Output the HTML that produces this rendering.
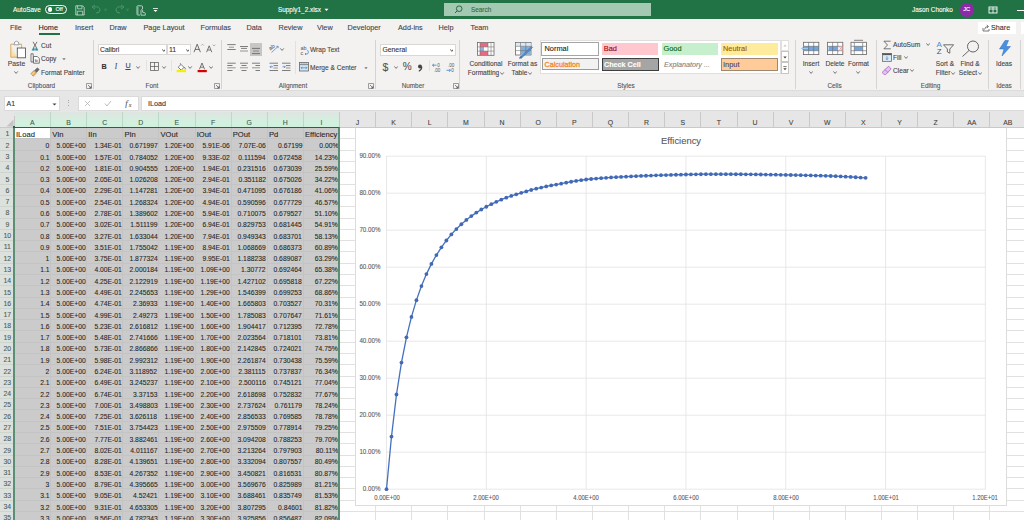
<!DOCTYPE html><html><head><meta charset="utf-8"><style>
html,body{margin:0;padding:0}
body{width:1024px;height:520px;overflow:hidden;position:relative;font-family:'Liberation Sans', sans-serif;background:#fff}
.t{position:absolute;white-space:pre;-webkit-text-stroke:0.1px currentColor}
.b{position:absolute;box-sizing:border-box}
</style></head><body>
<div class="b" style="left:0px;top:0px;width:1024px;height:18.7px;background:#217346"></div>
<div class="t" style="left:13px;top:3.749999999999999px;line-height:12.9px;font-size:6.45px;color:#fff;">AutoSave</div>
<div class="b" style="left:45px;top:5px;width:21.5px;height:8.6px;border:1px solid #fff;border-radius:5px"></div>
<div class="b" style="left:47.6px;top:7.2px;width:4.4px;height:4.4px;background:#fff;border-radius:50%"></div>
<div class="t" style="left:55.5px;top:4.300000000000001px;line-height:11.2px;font-size:5.6px;color:#fff;">Off</div>
<svg class="b" style="left:74.5px;top:4.5px" width="10" height="11" viewBox="0 0 10 11"><path d="M0.8 0.8H7.6L9.2 2.4V10H0.8Z" fill="none" stroke="#d5e8dc" stroke-width="0.75"/><path d="M2.6 0.8V3.8H7V0.8" fill="none" stroke="#d5e8dc" stroke-width="0.7"/><path d="M2.3 10V6.2H7.7V10" fill="none" stroke="#d5e8dc" stroke-width="0.7"/></svg>
<svg class="b" style="left:91px;top:4px" width="12" height="11" viewBox="0 0 12 11"><path d="M3 3 Q9 2 9 6 Q9 9 5 9" fill="none" stroke="#4f9470" stroke-width="1"/><path d="M1 3 L4 1 M1 3 L4 5" stroke="#4f9470" stroke-width="1"/></svg>
<div class="t" style="left:104px;top:4.5px;line-height:10px;font-size:5px;color:#4f9470;">˅</div>
<svg class="b" style="left:113px;top:4px" width="12" height="11" viewBox="0 0 12 11"><path d="M9 3 Q3 2 3 6 Q3 9 7 9" fill="none" stroke="#4f9470" stroke-width="1"/><path d="M11 3 L8 1 M11 3 L8 5" stroke="#4f9470" stroke-width="1"/></svg>
<div class="t" style="left:126px;top:4.5px;line-height:10px;font-size:5px;color:#4f9470;">˅</div>
<svg class="b" style="left:135.5px;top:4.5px" width="10" height="11" viewBox="0 0 10 11"><path d="M1 1.5Q1 0.8 1.7 0.8H5.5Q6.5 0.8 6.5 1.8V4" fill="none" stroke="#d5e8dc" stroke-width="0.8"/><path d="M1 1.5V9.3Q1 10 1.7 10H4" fill="none" stroke="#d5e8dc" stroke-width="0.8"/><path d="M2 2V9" stroke="#d5e8dc" stroke-width="0.6"/><path d="M5 10.2V5.5Q5 4.6 5.8 4.6Q6.6 4.6 6.6 5.5V7.2L8.5 7.6Q9.3 7.8 9.3 8.6V10.2Z" fill="#217346" stroke="#d5e8dc" stroke-width="0.75"/></svg>
<svg class="b" style="left:152px;top:6px" width="7" height="7" viewBox="0 0 7 7"><path d="M1 2.5H6" stroke="#fff" stroke-width="0.8"/><path d="M1.5 4L3.5 6L5.5 4Z" fill="#fff"/></svg>
<div class="t" style="left:278px;top:3.5999999999999996px;line-height:12.8px;font-size:6.4px;color:#fff;">Supply1_2.xlsx</div>
<svg class="b" style="left:324px;top:7.5px" width="5" height="4" viewBox="0 0 5 4"><path d="M0.5 0.8L2.5 3L4.5 0.8Z" fill="#fff"/></svg>
<div class="b" style="left:443.6px;top:3.3px;width:207px;height:12.3px;background:#a3c9b2"></div>
<svg class="b" style="left:454px;top:5px" width="9" height="9" viewBox="0 0 9 9"><circle cx="5.2" cy="3.7" r="2.8" fill="none" stroke="#1e5f3a" stroke-width="0.9"/><path d="M3.2 5.8L1 8" stroke="#1e5f3a" stroke-width="0.9"/></svg>
<div class="t" style="left:471px;top:3.6999999999999993px;line-height:12.8px;font-size:6.4px;color:#2e6b49;">Search</div>
<div class="t" style="left:912px;top:3.9000000000000004px;line-height:12.8px;font-size:6.4px;color:#fff;">Jason Chonko</div>
<div class="b" style="left:960px;top:3px;width:13.5px;height:13.5px;background:#8e2aa7;border-radius:50%"></div>
<div class="t" style="left:766.7px;width:400px;text-align:center;top:4.000000000000001px;line-height:11.6px;font-size:5.8px;color:#fff;">JC</div>
<svg class="b" style="left:988px;top:5.5px" width="10" height="8" viewBox="0 0 10 8"><rect x="1" y="1" width="8" height="6" fill="none" stroke="#fff" stroke-width="0.9"/><path d="M1 3H9M5 1V7" stroke="#fff" stroke-width="0.8"/></svg>
<div class="b" style="left:1017px;top:9.5px;width:7px;height:0.9px;background:#fff"></div>
<div class="b" style="left:0px;top:18.7px;width:1024px;height:71.7px;background:#f3f2f1"></div>
<div class="t" style="left:10px;top:21.0px;line-height:14.6px;font-size:7.3px;color:#444;">File</div>
<div class="t" style="left:38.5px;top:21.0px;line-height:14.6px;font-size:7.3px;color:#1f1f1f;">Home</div>
<div class="t" style="left:75px;top:21.0px;line-height:14.6px;font-size:7.3px;color:#444;">Insert</div>
<div class="t" style="left:109.5px;top:21.0px;line-height:14.6px;font-size:7.3px;color:#444;">Draw</div>
<div class="t" style="left:143.5px;top:21.0px;line-height:14.6px;font-size:7.3px;color:#444;">Page Layout</div>
<div class="t" style="left:200.5px;top:21.0px;line-height:14.6px;font-size:7.3px;color:#444;">Formulas</div>
<div class="t" style="left:246.5px;top:21.0px;line-height:14.6px;font-size:7.3px;color:#444;">Data</div>
<div class="t" style="left:278.5px;top:21.0px;line-height:14.6px;font-size:7.3px;color:#444;">Review</div>
<div class="t" style="left:317px;top:21.0px;line-height:14.6px;font-size:7.3px;color:#444;">View</div>
<div class="t" style="left:347.5px;top:21.0px;line-height:14.6px;font-size:7.3px;color:#444;">Developer</div>
<div class="t" style="left:398px;top:21.0px;line-height:14.6px;font-size:7.3px;color:#444;">Add-ins</div>
<div class="t" style="left:438.5px;top:21.0px;line-height:14.6px;font-size:7.3px;color:#444;">Help</div>
<div class="t" style="left:470.5px;top:21.0px;line-height:14.6px;font-size:7.3px;color:#444;">Team</div>
<div class="b" style="left:38.5px;top:33.3px;width:21px;height:1.4px;background:#217346"></div>
<div class="b" style="left:978px;top:21.5px;width:37.5px;height:12.5px;background:#fff"></div>
<svg class="b" style="left:981.5px;top:23.5px" width="8" height="8" viewBox="0 0 8 8"><path d="M1 4V7H7V5" fill="none" stroke="#555" stroke-width="0.8"/><path d="M2.5 5.5Q3 2.5 6 2.5M4.8 1L6.5 2.5L4.8 4" fill="none" stroke="#555" stroke-width="0.8"/></svg>
<div class="t" style="left:991px;top:20.6px;line-height:14.4px;font-size:7.2px;color:#333;">Share</div>
<div class="b" style="left:1021px;top:21.5px;width:3px;height:12.5px;background:#fff"></div>
<svg class="b" style="left:9px;top:39.5px" width="18" height="19" viewBox="0 0 18 19"><defs><linearGradient id="pg" x1="0" y1="0" x2="0" y2="1"><stop offset="0" stop-color="#fdf3dc"/><stop offset="1" stop-color="#f3dba6"/></linearGradient></defs><path d="M1.8 4.2H5.2M9.8 4.2H12.6V8" fill="none" stroke="#d2a556" stroke-width="0.9"/><path d="M1.8 4.2V17.2H8" fill="url(#pg)" stroke="#d2a556" stroke-width="0.9"/><path d="M5 4.8Q5 1.2 7.5 1.2Q10 1.2 10 4.8Z" fill="#fff" stroke="#8a8a8a" stroke-width="0.8"/><rect x="8.3" y="8" width="8.2" height="9.8" fill="#fff" stroke="#5a5a5a" stroke-width="0.9"/></svg>
<div class="t" style="left:-183.5px;width:400px;text-align:center;top:56.5px;line-height:13.6px;font-size:6.8px;color:#444;">Paste</div>
<svg class="b" style="left:14.4px;top:70.5px" width="4.2" height="3" viewBox="0 0 4.2 3"><path d="M0.4 0.4L2.1 2.4L3.8000000000000003 0.4" fill="none" stroke="#555" stroke-width="0.8"/></svg>
<svg class="b" style="left:30.5px;top:40.5px" width="8" height="10" viewBox="0 0 8 10"><path d="M2 0.8L5.2 6.2M6 0.8L2.8 6.2" stroke="#555" stroke-width="0.8"/><path d="M2.8 6L1 9.2H3.6Z M5.2 6L7 9.2H4.4Z" fill="#3b8fa3" stroke="#3b8fa3" stroke-width="0.6"/></svg>
<div class="t" style="left:41px;top:38.6px;line-height:13.2px;font-size:6.6px;color:#444;">Cut</div>
<svg class="b" style="left:29.5px;top:53px" width="11" height="11" viewBox="0 0 11 11"><path d="M1 0.8H3.2V9H1Z" fill="#fff" stroke="#555" stroke-width="0.8"/><path d="M3.5 3.5H7.3L9.3 5.5V10.2H3.5Z" fill="#fff" stroke="#555" stroke-width="0.8"/><path d="M5.3 6.2V8.6H7.3V7.2H5.3" fill="none" stroke="#555" stroke-width="0.6"/></svg>
<div class="t" style="left:41px;top:52.4px;line-height:13.2px;font-size:6.6px;color:#444;">Copy</div>
<svg class="b" style="left:62px;top:58.2px" width="4" height="2.5" viewBox="0 0 4 2.5"><path d="M0.3 0.3L2 2.2L3.7 0.3Z" fill="#777"/></svg>
<svg class="b" style="left:29.5px;top:66.5px" width="10" height="10" viewBox="0 0 10 10"><path d="M0.8 6.8L3.8 3.6L6.4 6.2L3.2 9.2Z" fill="#eab86a" stroke="#b37a2c" stroke-width="0.6"/><path d="M1.6 7.8L4.6 4.8" stroke="#fff3d8" stroke-width="0.6"/><path d="M4.6 3.4L7.4 0.8L9.2 2.6L6.6 5.4Z" fill="#6a6a6a" stroke="#555" stroke-width="0.5"/></svg>
<div class="t" style="left:41px;top:65.7px;line-height:13.2px;font-size:6.6px;color:#444;">Format Painter</div>
<div class="t" style="left:-158.5px;width:400px;text-align:center;top:80.0px;line-height:12.8px;font-size:6.4px;color:#555;">Clipboard</div>
<svg class="b" style="left:85.5px;top:83px" width="6" height="6" viewBox="0 0 6 6"><path d="M0.5 0.5H5.5V5.5H0.5Z" fill="none" stroke="#777" stroke-width="0.7" stroke-dasharray="0"/><path d="M2 2L5 5M5 3V5H3" fill="none" stroke="#555" stroke-width="0.7"/></svg>
<div class="b" style="left:92.5px;top:40px;width:0.9px;height:49px;background:#d6d4d2"></div>
<div class="b" style="left:97.8px;top:43.5px;width:69.4px;height:11.6px;background:#fff;border:0.8px solid #dad8d6"></div>
<div class="t" style="left:100px;top:42.6px;line-height:13.6px;font-size:6.8px;color:#333;">Calibri</div>
<svg class="b" style="left:161.7px;top:48.5px" width="3.6" height="3" viewBox="0 0 3.6 3"><path d="M0.4 0.4L1.8 2.4L3.2 0.4" fill="none" stroke="#333" stroke-width="0.8"/></svg>
<div class="b" style="left:167px;top:43.5px;width:24.2px;height:11.6px;background:#fff;border:0.8px solid #dad8d6"></div>
<div class="t" style="left:169px;top:42.6px;line-height:14.0px;font-size:7.0px;color:#333;">11</div>
<svg class="b" style="left:185.7px;top:48.5px" width="3.6" height="3" viewBox="0 0 3.6 3"><path d="M0.4 0.4L1.8 2.4L3.2 0.4" fill="none" stroke="#333" stroke-width="0.8"/></svg>
<svg class="b" style="left:193px;top:43px" width="24" height="11" viewBox="0 0 24 11"><path d="M1 9.2L4.2 1.2L7.4 9.2M2.2 6.4H6.2" fill="none" stroke="#555" stroke-width="0.85"/><path d="M8.2 2.6L9.6 1.2L11 2.6" fill="none" stroke="#888" stroke-width="0.6"/><path d="M13.6 9.2L16.2 2.8L18.8 9.2M14.6 7H17.8" fill="none" stroke="#555" stroke-width="0.8"/><path d="M19.6 1.6L21 3L22.4 1.6" fill="none" stroke="#888" stroke-width="0.6"/></svg>
<div class="t" style="left:-96px;width:400px;text-align:center;top:59.599999999999994px;line-height:14.4px;font-size:7.2px;color:#333;font-weight:bold">B</div>
<div class="t" style="left:-84px;width:400px;text-align:center;top:59.599999999999994px;line-height:14.4px;font-size:7.2px;color:#444;font-style:italic;font-family:Liberation Serif">I</div>
<div class="t" style="left:-72px;width:400px;text-align:center;top:59.3px;line-height:14.4px;font-size:7.2px;color:#444;text-decoration:underline">U</div>
<svg class="b" style="left:136.4px;top:65.5px" width="4.2" height="3" viewBox="0 0 4.2 3"><path d="M0.4 0.4L2.1 2.4L3.8000000000000003 0.4" fill="none" stroke="#555" stroke-width="0.8"/></svg>
<div class="b" style="left:145.5px;top:60px;width:0.7px;height:11px;background:#e4e2e0"></div>
<svg class="b" style="left:150px;top:61.8px" width="9" height="9" viewBox="0 0 9 9"><rect x="0.4" y="0.4" width="8.2" height="8.2" fill="none" stroke="#555" stroke-width="0.7"/><path d="M4.5 0.4V8.6M0.4 4.5H8.6" stroke="#555" stroke-width="0.7"/></svg>
<svg class="b" style="left:162.4px;top:65.5px" width="4.2" height="3" viewBox="0 0 4.2 3"><path d="M0.4 0.4L2.1 2.4L3.8000000000000003 0.4" fill="none" stroke="#555" stroke-width="0.8"/></svg>
<div class="b" style="left:171px;top:60px;width:0.7px;height:11px;background:#e4e2e0"></div>
<svg class="b" style="left:175.5px;top:61.5px" width="11" height="11" viewBox="0 0 11 11"><path d="M2.2 5.2L5 2.4L8 5.4L5.2 8.2Z" fill="#fff" stroke="#555" stroke-width="0.75"/><path d="M4.2 1.2L5 2.4" stroke="#555" stroke-width="0.7"/><path d="M8.4 5.2Q9.6 6.4 9.2 7.4" fill="none" stroke="#555" stroke-width="0.8"/><rect x="0.6" y="8" width="9.4" height="2.2" fill="#f2f200"/></svg>
<svg class="b" style="left:188.4px;top:65.5px" width="4.2" height="3" viewBox="0 0 4.2 3"><path d="M0.4 0.4L2.1 2.4L3.8000000000000003 0.4" fill="none" stroke="#555" stroke-width="0.8"/></svg>
<svg class="b" style="left:196.5px;top:61.5px" width="10" height="11" viewBox="0 0 10 11"><path d="M2.4 7.4L5 1L7.6 7.4M3.4 5.2H6.6" fill="none" stroke="#555" stroke-width="0.8"/><rect x="0.6" y="8" width="9.2" height="2.2" fill="#d90000"/></svg>
<svg class="b" style="left:208.9px;top:65.5px" width="4.2" height="3" viewBox="0 0 4.2 3"><path d="M0.4 0.4L2.1 2.4L3.8000000000000003 0.4" fill="none" stroke="#555" stroke-width="0.8"/></svg>
<div class="t" style="left:-48px;width:400px;text-align:center;top:80.0px;line-height:12.8px;font-size:6.4px;color:#555;">Font</div>
<svg class="b" style="left:214px;top:83px" width="6" height="6" viewBox="0 0 6 6"><path d="M0.5 0.5H5.5V5.5H0.5Z" fill="none" stroke="#777" stroke-width="0.7" stroke-dasharray="0"/><path d="M2 2L5 5M5 3V5H3" fill="none" stroke="#555" stroke-width="0.7"/></svg>
<div class="b" style="left:220.6px;top:40px;width:0.9px;height:49px;background:#d6d4d2"></div>
<div class="b" style="left:250.2px;top:43px;width:11.8px;height:12.6px;background:#c8c6c4"></div>
<svg class="b" style="left:0;top:0" width="1024" height="100" viewBox="0 0 1024 100"><path d="M227.3 44.6H235.7" stroke="#555" stroke-width="0.75"/><path d="M229 47.2H234" stroke="#777" stroke-width="0.75"/><path d="M227.3 49.5H235.7" stroke="#555" stroke-width="0.75"/><path d="M240 46.5H248" stroke="#555" stroke-width="0.75"/><path d="M241 48.4H247" stroke="#555" stroke-width="0.75"/><path d="M240 51H248" stroke="#777" stroke-width="0.75"/><path d="M252 48.4H260" stroke="#555" stroke-width="0.75"/><path d="M253 51H259" stroke="#777" stroke-width="0.75"/><path d="M252 53.6H260" stroke="#555" stroke-width="0.75"/><path d="M227.3 63.2H235.7" stroke="#555" stroke-width="0.75"/><path d="M240 63.2H248" stroke="#555" stroke-width="0.75"/><path d="M252 63.2H260" stroke="#555" stroke-width="0.75"/><path d="M227.3 65.5H232.5" stroke="#555" stroke-width="0.75"/><path d="M241.5 65.5H246.5" stroke="#555" stroke-width="0.75"/><path d="M255.5 65.5H260" stroke="#555" stroke-width="0.75"/><path d="M227.3 67.8H235.7" stroke="#777" stroke-width="0.75"/><path d="M240 67.8H248" stroke="#777" stroke-width="0.75"/><path d="M252 67.8H260" stroke="#777" stroke-width="0.75"/><path d="M227.3 70.5H232.5" stroke="#555" stroke-width="0.75"/><path d="M241.5 70.5H246.5" stroke="#555" stroke-width="0.75"/><path d="M255.5 70.5H260" stroke="#555" stroke-width="0.75"/><path d="M269.5 63.2H278.0" stroke="#555" stroke-width="0.75"/><path d="M273.5 65.6H278.0" stroke="#555" stroke-width="0.75"/><path d="M273.5 68H278.0" stroke="#777" stroke-width="0.75"/><path d="M269.5 70.5H278.0" stroke="#555" stroke-width="0.75"/><path d="M282 63.2H290.5" stroke="#555" stroke-width="0.75"/><path d="M286 65.6H290.5" stroke="#555" stroke-width="0.75"/><path d="M286 68H290.5" stroke="#777" stroke-width="0.75"/><path d="M282 70.5H290.5" stroke="#555" stroke-width="0.75"/><path d="M273 66.8H270M271.2 65.6L270 66.8L271.2 68" fill="none" stroke="#3a7dc9" stroke-width="0.7"/><path d="M282.5 66.8H285.3M284.1 65.6L285.3 66.8L284.1 68" fill="none" stroke="#3a7dc9" stroke-width="0.7"/><text x="268.5" y="49" font-size="5.8" fill="#555" font-family="Liberation Sans" transform="rotate(-40 272 47)">ab</text><path d="M271.5 52.5L278 46.5M276.3 46.3H278.2V48.2" fill="none" stroke="#3a7dc9" stroke-width="0.7"/></svg>
<svg class="b" style="left:280.4px;top:47.5px" width="4.2" height="3" viewBox="0 0 4.2 3"><path d="M0.4 0.4L2.1 2.4L3.8000000000000003 0.4" fill="none" stroke="#555" stroke-width="0.8"/></svg>
<div class="b" style="left:294.6px;top:41px;width:0.7px;height:33px;background:#e3e1df"></div>
<svg class="b" style="left:299.5px;top:43.5px" width="10" height="12" viewBox="0 0 10 12"><text x="0.5" y="5.5" font-size="5.5" fill="#555" font-family="Liberation Sans">ab</text><text x="0.5" y="11" font-size="5.5" fill="#555" font-family="Liberation Sans">c</text><path d="M7.5 6Q9.5 8 7.5 10H5M6 9L5 10L6 11" fill="none" stroke="#3a7dc9" stroke-width="0.7"/></svg>
<div class="t" style="left:310px;top:42.9px;line-height:13.2px;font-size:6.6px;color:#444;">Wrap Text</div>
<svg class="b" style="left:298.5px;top:62px" width="10" height="9.5" viewBox="0 0 10 9.5"><rect x="0.5" y="0.5" width="9" height="8.5" fill="#cfe3f5" stroke="#666" stroke-width="0.8"/><path d="M0.5 2.6H9.5" stroke="#666" stroke-width="0.7"/><path d="M2.8 1.2V2.2M5 1.2V2.2M7.2 1.2V2.2" stroke="#666" stroke-width="0.5"/><path d="M2 5.8H8M3 4.8L2 5.8L3 6.8M7 4.8L8 5.8L7 6.8" fill="none" stroke="#3a6fa8" stroke-width="0.6"/></svg>
<div class="t" style="left:310px;top:60.9px;line-height:13.2px;font-size:6.6px;color:#444;">Merge &amp; Center</div>
<svg class="b" style="left:363.5px;top:66.6px" width="4" height="2.5" viewBox="0 0 4 2.5"><path d="M0.3 0.3L2 2.2L3.7 0.3Z" fill="#777"/></svg>
<div class="t" style="left:93px;width:400px;text-align:center;top:80.0px;line-height:12.8px;font-size:6.4px;color:#555;">Alignment</div>
<svg class="b" style="left:368px;top:83px" width="6" height="6" viewBox="0 0 6 6"><path d="M0.5 0.5H5.5V5.5H0.5Z" fill="none" stroke="#777" stroke-width="0.7" stroke-dasharray="0"/><path d="M2 2L5 5M5 3V5H3" fill="none" stroke="#555" stroke-width="0.7"/></svg>
<div class="b" style="left:374.5px;top:40px;width:0.9px;height:49px;background:#d6d4d2"></div>
<div class="b" style="left:380px;top:43.5px;width:75.6px;height:12px;background:#fff;border:0.8px solid #dad8d6"></div>
<div class="t" style="left:382.5px;top:42.900000000000006px;line-height:13.6px;font-size:6.8px;color:#333;">General</div>
<svg class="b" style="left:449.7px;top:48.5px" width="3.6" height="3" viewBox="0 0 3.6 3"><path d="M0.4 0.4L1.8 2.4L3.2 0.4" fill="none" stroke="#333" stroke-width="0.8"/></svg>
<div class="t" style="left:185.5px;width:400px;text-align:center;top:56.5px;line-height:21.0px;font-size:10.5px;color:#555;">$</div>
<svg class="b" style="left:393.9px;top:66.0px" width="4.2" height="3" viewBox="0 0 4.2 3"><path d="M0.4 0.4L2.1 2.4L3.8000000000000003 0.4" fill="none" stroke="#555" stroke-width="0.8"/></svg>
<div class="t" style="left:207.2px;width:400px;text-align:center;top:57.2px;line-height:20px;font-size:10px;color:#555;">%</div>
<svg class="b" style="left:416.5px;top:64px" width="6" height="8" viewBox="0 0 6 8"><circle cx="3" cy="2.6" r="2" fill="#444"/><path d="M4.8 2.8Q4.8 5.8 1.8 7.2" fill="none" stroke="#444" stroke-width="1.2"/></svg>
<div class="b" style="left:428.5px;top:60px;width:0.7px;height:11px;background:#e4e2e0"></div>
<svg class="b" style="left:431.5px;top:61.5px" width="10" height="11" viewBox="0 0 10 11"><text x="5.2" y="4.8" font-size="4.6" fill="#555" font-family="Liberation Sans">0</text><text x="2" y="10" font-size="4.6" fill="#555" font-family="Liberation Sans">.00</text><path d="M0.5 3.2H4.5M2 1.8L0.5 3.2L2 4.6" fill="none" stroke="#3a7dc9" stroke-width="0.8"/></svg>
<svg class="b" style="left:445.5px;top:61.5px" width="10" height="11" viewBox="0 0 10 11"><text x="2" y="4.8" font-size="4.6" fill="#555" font-family="Liberation Sans">.00</text><text x="5.2" y="10" font-size="4.6" fill="#555" font-family="Liberation Sans">0</text><path d="M0.5 8.3H4.5M3.2 6.9L4.6 8.3L3.2 9.7" fill="none" stroke="#3a7dc9" stroke-width="0.8"/></svg>
<div class="t" style="left:213px;width:400px;text-align:center;top:80.0px;line-height:12.8px;font-size:6.4px;color:#555;">Number</div>
<svg class="b" style="left:453px;top:83px" width="6" height="6" viewBox="0 0 6 6"><path d="M0.5 0.5H5.5V5.5H0.5Z" fill="none" stroke="#777" stroke-width="0.7" stroke-dasharray="0"/><path d="M2 2L5 5M5 3V5H3" fill="none" stroke="#555" stroke-width="0.7"/></svg>
<div class="b" style="left:459.4px;top:40px;width:0.9px;height:49px;background:#d6d4d2"></div>
<svg class="b" style="left:476.5px;top:41.5px" width="18" height="14" viewBox="0 0 18 14"><rect x="0.5" y="0.5" width="16.5" height="12.8" fill="#fff" stroke="#6a6a6a" stroke-width="0.8"/><rect x="3" y="0.9" width="8" height="4" fill="#e96a80"/><rect x="3" y="9.1" width="8" height="4" fill="#e96a80"/><rect x="3" y="4.9" width="4" height="4.2" fill="#8fb4dc"/><path d="M0.5 4.9H17M0.5 9.1H17M3 0.5V13.3M11 0.5V13.3M14 0.5V13.3" stroke="#6a6a6a" stroke-width="0.55"/></svg>
<div class="t" style="left:286px;width:400px;text-align:center;top:56.9px;line-height:13.2px;font-size:6.6px;color:#444;">Conditional</div>
<div class="t" style="left:283.5px;width:400px;text-align:center;top:66.10000000000001px;line-height:13.2px;font-size:6.6px;color:#444;">Formatting</div>
<svg class="b" style="left:500.4px;top:71.5px" width="4.2" height="3" viewBox="0 0 4.2 3"><path d="M0.4 0.4L2.1 2.4L3.8000000000000003 0.4" fill="none" stroke="#555" stroke-width="0.8"/></svg>
<svg class="b" style="left:514.5px;top:41.5px" width="19" height="17" viewBox="0 0 19 17"><rect x="0.5" y="0.5" width="15.5" height="12.5" fill="#fff" stroke="#6a6a6a" stroke-width="0.8"/><rect x="0.9" y="0.9" width="14.8" height="3.4" fill="#dbeaf7"/><rect x="5.7" y="4.4" width="10" height="8.3" fill="#7fb0e0"/><path d="M0.5 4.3H16M0.5 8.6H16M5.5 0.5V13M10.8 0.5V13" stroke="#6a6a6a" stroke-width="0.55"/><path d="M5 15.5L16.5 4.3L17.6 5.4L6.2 16.4Z" fill="#5c8fc7" stroke="#3f6b9c" stroke-width="0.5"/><path d="M4.5 16.5L6.5 14.2" stroke="#3f6b9c" stroke-width="1.2"/></svg>
<div class="t" style="left:322.5px;width:400px;text-align:center;top:56.9px;line-height:13.2px;font-size:6.6px;color:#444;">Format as</div>
<div class="t" style="left:319.5px;width:400px;text-align:center;top:66.10000000000001px;line-height:13.2px;font-size:6.6px;color:#444;">Table</div>
<svg class="b" style="left:527.9px;top:71.5px" width="4.2" height="3" viewBox="0 0 4.2 3"><path d="M0.4 0.4L2.1 2.4L3.8000000000000003 0.4" fill="none" stroke="#555" stroke-width="0.8"/></svg>
<div class="b" style="left:539.8px;top:39.9px;width:241px;height:34.4px;background:#fff;border:0.8px solid #e1dfdd"></div>
<div class="b" style="left:541.4px;top:41.5px;width:58.1px;height:14.8px;background:#fff;border:1.3px solid #a5a5a5"></div>
<div class="t" style="left:544.5px;top:42.2px;line-height:14.8px;font-size:7.4px;color:#222;">Normal</div>
<div class="b" style="left:602px;top:43px;width:56.3px;height:12px;background:#ffc7ce"></div>
<div class="t" style="left:603.8px;top:42.2px;line-height:14.8px;font-size:7.4px;color:#9c0006;">Bad</div>
<div class="b" style="left:661.7px;top:43px;width:56.3px;height:12px;background:#c6efce"></div>
<div class="t" style="left:663.5px;top:42.2px;line-height:14.8px;font-size:7.4px;color:#006100;">Good</div>
<div class="b" style="left:721px;top:43px;width:57px;height:12px;background:#ffeb9c"></div>
<div class="t" style="left:723px;top:42.2px;line-height:14.8px;font-size:7.4px;color:#9c5700;">Neutral</div>
<div class="b" style="left:542px;top:58.3px;width:56.5px;height:12.2px;background:#f2f2f2;border:0.7px solid #9a9a9a"></div>
<div class="t" style="left:544.5px;top:58.0px;line-height:14.4px;font-size:7.2px;color:#f08a2c;-webkit-text-stroke:0.3px #f08a2c">Calculation</div>
<div class="b" style="left:602px;top:58.3px;width:56.5px;height:12.5px;background:#a5a5a5;border:1.4px solid #3f3f3f"></div>
<div class="t" style="left:604px;top:58.0px;line-height:14.4px;font-size:7.2px;color:#fff;font-weight:bold">Check Cell</div>
<div class="t" style="left:664px;top:58.2px;line-height:14.4px;font-size:7.2px;color:#7f7f7f;font-style:italic">Explanatory ...</div>
<div class="b" style="left:721px;top:58.3px;width:57px;height:12.5px;background:#ffcc99;border:0.7px solid #a08870"></div>
<div class="t" style="left:723px;top:57.800000000000004px;line-height:14.8px;font-size:7.4px;color:#3f3f76;">Input</div>
<div class="b" style="left:780.5px;top:40px;width:8.2px;height:11px;background:#fff;border:0.7px solid #e1dfdd"></div>
<div class="b" style="left:780.5px;top:51px;width:8.2px;height:11px;background:#fff;border:0.7px solid #c8c6c4"></div>
<div class="b" style="left:780.5px;top:62px;width:8.2px;height:12.3px;background:#fff;border:0.7px solid #c8c6c4"></div>
<svg class="b" style="left:782.5px;top:43.5px" width="4" height="3" viewBox="0 0 4 3"><path d="M0.3 2.5L2 0.6L3.7 2.5Z" fill="#c8c6c4"/></svg>
<svg class="b" style="left:782.5px;top:55.5px" width="4" height="3" viewBox="0 0 4 3"><path d="M0.3 0.5L2 2.4L3.7 0.5Z" fill="#444"/></svg>
<svg class="b" style="left:782.5px;top:65.5px" width="4" height="5" viewBox="0 0 4 5"><path d="M0.3 0.6H3.7" stroke="#444" stroke-width="0.7"/><path d="M0.3 2.2L2 4.2L3.7 2.2Z" fill="#444"/></svg>
<div class="t" style="left:426px;width:400px;text-align:center;top:80.0px;line-height:12.8px;font-size:6.4px;color:#555;">Styles</div>
<div class="b" style="left:794.5px;top:40px;width:0.9px;height:49px;background:#d6d4d2"></div>
<svg class="b" style="left:0;top:0" width="1024" height="100" viewBox="0 0 1024 100"><rect x="803.5" y="42.3" width="15.3" height="12.3" fill="#fff"/><rect x="803.5" y="46.3" width="15.3" height="4.4" fill="#6fa6de"/><rect x="803.5" y="42.3" width="15.3" height="12.3" fill="none" stroke="#666" stroke-width="0.8"/><path d="M808.6 42.3V54.599999999999994" stroke="#666" stroke-width="0.6"/><path d="M813.7 42.3V54.599999999999994" stroke="#666" stroke-width="0.6"/><path d="M803.5 46.3H818.8" stroke="#666" stroke-width="0.6"/><path d="M803.5 50.7H818.8" stroke="#666" stroke-width="0.6"/><path d="M801.5 48.5H808M803.5 46.8L801.5 48.5L803.5 50.2" fill="none" stroke="#9cc7ee" stroke-width="1"/><rect x="827.5" y="42.3" width="15.3" height="12.3" fill="#fff"/><rect x="828.5" y="46.3" width="9" height="4.4" fill="#6fa6de"/><rect x="827.5" y="42.3" width="15.3" height="12.3" fill="none" stroke="#666" stroke-width="0.8"/><path d="M832.6 42.3V54.599999999999994" stroke="#666" stroke-width="0.6"/><path d="M837.7 42.3V54.599999999999994" stroke="#666" stroke-width="0.6"/><path d="M827.5 46.3H842.8" stroke="#666" stroke-width="0.6"/><path d="M827.5 50.7H842.8" stroke="#666" stroke-width="0.6"/><path d="M838.3 45.5L843.3 51.5M843.3 45.5L838.3 51.5" stroke="#ec8a8a" stroke-width="0.8"/><rect x="851" y="42.3" width="15.5" height="12.3" fill="#fff"/><rect x="854.3" y="46.3" width="8.4" height="4.4" fill="#6fa6de"/><rect x="851" y="42.3" width="15.5" height="12.3" fill="none" stroke="#666" stroke-width="0.8"/><path d="M854.3 42.3V54.599999999999994" stroke="#666" stroke-width="0.6"/><path d="M862.7 42.3V54.599999999999994" stroke="#666" stroke-width="0.6"/><path d="M851 46.3H866.5" stroke="#666" stroke-width="0.6"/><path d="M851 50.7H866.5" stroke="#666" stroke-width="0.6"/><path d="M854 40.3H863" stroke="#666" stroke-width="0.8"/></svg>
<div class="t" style="left:611px;width:400px;text-align:center;top:56.9px;line-height:13.2px;font-size:6.6px;color:#444;">Insert</div>
<svg class="b" style="left:808.9px;top:70.8px" width="4.2" height="3" viewBox="0 0 4.2 3"><path d="M0.4 0.4L2.1 2.4L3.8000000000000003 0.4" fill="none" stroke="#555" stroke-width="0.8"/></svg>
<div class="t" style="left:635px;width:400px;text-align:center;top:56.9px;line-height:13.2px;font-size:6.6px;color:#444;">Delete</div>
<svg class="b" style="left:832.9px;top:70.8px" width="4.2" height="3" viewBox="0 0 4.2 3"><path d="M0.4 0.4L2.1 2.4L3.8000000000000003 0.4" fill="none" stroke="#555" stroke-width="0.8"/></svg>
<div class="t" style="left:658.5px;width:400px;text-align:center;top:56.9px;line-height:13.2px;font-size:6.6px;color:#444;">Format</div>
<svg class="b" style="left:856.4px;top:70.8px" width="4.2" height="3" viewBox="0 0 4.2 3"><path d="M0.4 0.4L2.1 2.4L3.8000000000000003 0.4" fill="none" stroke="#555" stroke-width="0.8"/></svg>
<div class="t" style="left:634.5px;width:400px;text-align:center;top:80.0px;line-height:12.8px;font-size:6.4px;color:#555;">Cells</div>
<div class="b" style="left:875.7px;top:40px;width:0.9px;height:49px;background:#d6d4d2"></div>
<svg class="b" style="left:882.5px;top:39.5px" width="9" height="10" viewBox="0 0 9 10"><path d="M7.6 1.2H0.9L4.5 5L0.9 8.8H7.8" fill="none" stroke="#555" stroke-width="0.8" stroke-linejoin="miter"/></svg>
<div class="t" style="left:893px;top:38.1px;line-height:13.2px;font-size:6.6px;color:#444;">AutoSum</div>
<svg class="b" style="left:925.9px;top:43.3px" width="4.2" height="3" viewBox="0 0 4.2 3"><path d="M0.4 0.4L2.1 2.4L3.8000000000000003 0.4" fill="none" stroke="#555" stroke-width="0.8"/></svg>
<svg class="b" style="left:881.5px;top:52.5px" width="10" height="9" viewBox="0 0 10 9"><rect x="0.5" y="0.5" width="9" height="7.8" fill="#dbeaf7" stroke="#555" stroke-width="0.7"/><rect x="0.5" y="0.5" width="9" height="1.6" fill="#555"/><path d="M5 3.2V6.6M3.6 5.3L5 6.6L6.4 5.3" fill="none" stroke="#3a7dc9" stroke-width="0.65"/></svg>
<div class="t" style="left:893px;top:50.8px;line-height:13.2px;font-size:6.6px;color:#444;">Fill</div>
<svg class="b" style="left:903.9px;top:56.0px" width="4.2" height="3" viewBox="0 0 4.2 3"><path d="M0.4 0.4L2.1 2.4L3.8000000000000003 0.4" fill="none" stroke="#555" stroke-width="0.8"/></svg>
<svg class="b" style="left:881.5px;top:65px" width="10" height="10" viewBox="0 0 10 10"><path d="M0.8 6.8L5.8 1.8Q6.5 1.1 7.2 1.8L8.6 3.2Q9.3 3.9 8.6 4.6L3.6 9.6Q2.9 10.3 2.2 9.6L0.8 8.2Q0.1 7.5 0.8 6.8Z" fill="#e3c2ef" stroke="#a75bc4" stroke-width="0.8"/><path d="M3 4.6L6 7.6" stroke="#a75bc4" stroke-width="0.7"/></svg>
<div class="t" style="left:893px;top:63.699999999999996px;line-height:13.2px;font-size:6.6px;color:#444;">Clear</div>
<svg class="b" style="left:909.9px;top:69.0px" width="4.2" height="3" viewBox="0 0 4.2 3"><path d="M0.4 0.4L2.1 2.4L3.8000000000000003 0.4" fill="none" stroke="#555" stroke-width="0.8"/></svg>
<svg class="b" style="left:936px;top:39.5px" width="20" height="16" viewBox="0 0 20 16"><text x="0.6" y="7.3" font-size="8" fill="#4a8ad4" font-family="Liberation Sans">A</text><text x="0.8" y="14.3" font-size="8" fill="#555" font-family="Liberation Sans">Z</text><path d="M7.5 4.8H17.6L13.8 9V13.2L11.4 12V9Z" fill="none" stroke="#555" stroke-width="0.85" stroke-linejoin="round"/></svg>
<div class="t" style="left:745px;width:400px;text-align:center;top:56.9px;line-height:13.2px;font-size:6.6px;color:#444;">Sort &amp;</div>
<div class="t" style="left:743px;width:400px;text-align:center;top:65.9px;line-height:13.2px;font-size:6.6px;color:#444;">Filter</div>
<svg class="b" style="left:951.4px;top:71.5px" width="4.2" height="3" viewBox="0 0 4.2 3"><path d="M0.4 0.4L2.1 2.4L3.8000000000000003 0.4" fill="none" stroke="#555" stroke-width="0.8"/></svg>
<svg class="b" style="left:961px;top:39.5px" width="19" height="18" viewBox="0 0 19 18"><circle cx="12" cy="6.5" r="5.5" fill="none" stroke="#555" stroke-width="0.9"/><path d="M8 10.5L1.5 16.5" stroke="#555" stroke-width="0.9"/></svg>
<div class="t" style="left:770px;width:400px;text-align:center;top:56.9px;line-height:13.2px;font-size:6.6px;color:#444;">Find &amp;</div>
<div class="t" style="left:768px;width:400px;text-align:center;top:65.9px;line-height:13.2px;font-size:6.6px;color:#444;">Select</div>
<svg class="b" style="left:977.9px;top:71.5px" width="4.2" height="3" viewBox="0 0 4.2 3"><path d="M0.4 0.4L2.1 2.4L3.8000000000000003 0.4" fill="none" stroke="#555" stroke-width="0.8"/></svg>
<div class="t" style="left:730.5px;width:400px;text-align:center;top:80.0px;line-height:12.8px;font-size:6.4px;color:#555;">Editing</div>
<div class="b" style="left:988.3px;top:40px;width:0.9px;height:49px;background:#d6d4d2"></div>
<svg class="b" style="left:998px;top:40px" width="14" height="17" viewBox="0 0 14 17"><path d="M7 0.5L1.5 9H6L4 16L12.5 6.5H8L10.5 0.5Z" fill="#4a90e2" stroke="#2c6cb9" stroke-width="0.5"/></svg>
<div class="t" style="left:804px;width:400px;text-align:center;top:56.9px;line-height:13.2px;font-size:6.6px;color:#444;">Ideas</div>
<div class="t" style="left:804px;width:400px;text-align:center;top:80.0px;line-height:12.8px;font-size:6.4px;color:#555;">Ideas</div>
<div class="b" style="left:1020px;top:40px;width:0.9px;height:49px;background:#d6d4d2"></div>
<div class="b" style="left:0px;top:90.2px;width:1024px;height:24.5px;background:#e6e6e6"></div>
<div class="b" style="left:0px;top:90.2px;width:1024px;height:1.2px;background:#dcdcdc"></div>
<div class="b" style="left:3.5px;top:96.4px;width:56.6px;height:14.2px;background:#fff;border:0.7px solid #dadada"></div>
<div class="b" style="left:77.5px;top:96.4px;width:61.6px;height:14.2px;background:#fff;border:0.7px solid #dadada"></div>
<div class="b" style="left:141.4px;top:96.4px;width:890px;height:14.2px;background:#fff;border:0.7px solid #dadada"></div>
<div class="t" style="left:6.5px;top:97.2px;line-height:14.0px;font-size:7.0px;color:#333;">A1</div>
<svg class="b" style="left:52px;top:102.5px" width="5" height="3" viewBox="0 0 5 3"><path d="M0.5 0.5L2.5 2.5L4.5 0.5Z" fill="#444"/></svg>
<div class="b" style="left:67.8px;top:99.5px;width:0.9px;height:7.5px;background:repeating-linear-gradient(#aaa 0 0.9px, transparent 0.9px 1.8px)"></div>
<svg class="b" style="left:83.5px;top:99.5px" width="7" height="7" viewBox="0 0 7 7"><path d="M1 1L6 6M6 1L1 6" stroke="#b5b5b5" stroke-width="0.8"/></svg>
<svg class="b" style="left:104px;top:99.5px" width="8" height="7" viewBox="0 0 8 7"><path d="M1 3.5L3 6L7 1" fill="none" stroke="#b5b5b5" stroke-width="0.9"/></svg>
<div class="t" style="left:125.3px;top:95.1px;line-height:17.0px;font-size:8.5px;color:#555;font-style:italic;font-family:Liberation Serif">f</div>
<div class="t" style="left:128.8px;top:99px;line-height:12px;font-size:6px;color:#555;font-style:italic;font-family:Liberation Serif">x</div>
<div class="t" style="left:148px;top:97.1px;line-height:14.4px;font-size:7.2px;color:#333;">ILoad</div>
<div class="b" style="left:0px;top:114.6px;width:1024px;height:13.0px;background:#e6e6e6"></div>
<div class="b" style="left:14.3px;top:111.5px;width:325.17px;height:16.099999999999994px;background:linear-gradient(#dfe5e1,#d2f0df 60%,#d0f2de)"></div>
<svg class="b" style="left:6px;top:118.5px" width="8" height="8" viewBox="0 0 8 8"><path d="M7.5 0.5V7.5H0.5Z" fill="#c4c4c4"/></svg>
<div class="b" style="left:50.03000000000001px;top:112.4px;width:0.8px;height:15.199999999999989px;background:#bcd9c8"></div>
<div class="t" style="left:-167.635px;width:400px;text-align:center;top:115.6px;line-height:13.8px;font-size:6.9px;color:#3f5f4c;">A</div>
<div class="b" style="left:86.16px;top:112.4px;width:0.8px;height:15.199999999999989px;background:#bcd9c8"></div>
<div class="t" style="left:-131.505px;width:400px;text-align:center;top:115.6px;line-height:13.8px;font-size:6.9px;color:#3f5f4c;">B</div>
<div class="b" style="left:122.28999999999999px;top:112.4px;width:0.8px;height:15.199999999999989px;background:#bcd9c8"></div>
<div class="t" style="left:-95.375px;width:400px;text-align:center;top:115.6px;line-height:13.8px;font-size:6.9px;color:#3f5f4c;">C</div>
<div class="b" style="left:158.42000000000002px;top:112.4px;width:0.8px;height:15.199999999999989px;background:#bcd9c8"></div>
<div class="t" style="left:-59.244999999999976px;width:400px;text-align:center;top:115.6px;line-height:13.8px;font-size:6.9px;color:#3f5f4c;">D</div>
<div class="b" style="left:194.55px;top:112.4px;width:0.8px;height:15.199999999999989px;background:#bcd9c8"></div>
<div class="t" style="left:-23.11499999999998px;width:400px;text-align:center;top:115.6px;line-height:13.8px;font-size:6.9px;color:#3f5f4c;">E</div>
<div class="b" style="left:230.68px;top:112.4px;width:0.8px;height:15.199999999999989px;background:#bcd9c8"></div>
<div class="t" style="left:13.015000000000015px;width:400px;text-align:center;top:115.6px;line-height:13.8px;font-size:6.9px;color:#3f5f4c;">F</div>
<div class="b" style="left:266.81000000000006px;top:112.4px;width:0.8px;height:15.199999999999989px;background:#bcd9c8"></div>
<div class="t" style="left:49.14500000000004px;width:400px;text-align:center;top:115.6px;line-height:13.8px;font-size:6.9px;color:#3f5f4c;">G</div>
<div class="b" style="left:302.94000000000005px;top:112.4px;width:0.8px;height:15.199999999999989px;background:#bcd9c8"></div>
<div class="t" style="left:85.27500000000003px;width:400px;text-align:center;top:115.6px;line-height:13.8px;font-size:6.9px;color:#3f5f4c;">H</div>
<div class="b" style="left:339.07000000000005px;top:112.4px;width:0.8px;height:15.199999999999989px;background:#c9c9c9"></div>
<div class="t" style="left:121.40500000000003px;width:400px;text-align:center;top:115.6px;line-height:13.8px;font-size:6.9px;color:#3f5f4c;">I</div>
<div class="b" style="left:375.20000000000005px;top:112.4px;width:0.8px;height:15.199999999999989px;background:#c9c9c9"></div>
<div class="t" style="left:157.53500000000003px;width:400px;text-align:center;top:115.6px;line-height:13.8px;font-size:6.9px;color:#444;">J</div>
<div class="b" style="left:411.33000000000004px;top:112.4px;width:0.8px;height:15.199999999999989px;background:#c9c9c9"></div>
<div class="t" style="left:193.66500000000002px;width:400px;text-align:center;top:115.6px;line-height:13.8px;font-size:6.9px;color:#444;">K</div>
<div class="b" style="left:447.46000000000004px;top:112.4px;width:0.8px;height:15.199999999999989px;background:#c9c9c9"></div>
<div class="t" style="left:229.79500000000002px;width:400px;text-align:center;top:115.6px;line-height:13.8px;font-size:6.9px;color:#444;">L</div>
<div class="b" style="left:483.5900000000001px;top:112.4px;width:0.8px;height:15.199999999999989px;background:#c9c9c9"></div>
<div class="t" style="left:265.92500000000007px;width:400px;text-align:center;top:115.6px;line-height:13.8px;font-size:6.9px;color:#444;">M</div>
<div class="b" style="left:519.7200000000001px;top:112.4px;width:0.8px;height:15.199999999999989px;background:#c9c9c9"></div>
<div class="t" style="left:302.05500000000006px;width:400px;text-align:center;top:115.6px;line-height:13.8px;font-size:6.9px;color:#444;">N</div>
<div class="b" style="left:555.85px;top:112.4px;width:0.8px;height:15.199999999999989px;background:#c9c9c9"></div>
<div class="t" style="left:338.18500000000006px;width:400px;text-align:center;top:115.6px;line-height:13.8px;font-size:6.9px;color:#444;">O</div>
<div class="b" style="left:591.98px;top:112.4px;width:0.8px;height:15.199999999999989px;background:#c9c9c9"></div>
<div class="t" style="left:374.31500000000005px;width:400px;text-align:center;top:115.6px;line-height:13.8px;font-size:6.9px;color:#444;">P</div>
<div class="b" style="left:628.11px;top:112.4px;width:0.8px;height:15.199999999999989px;background:#c9c9c9"></div>
<div class="t" style="left:410.44500000000005px;width:400px;text-align:center;top:115.6px;line-height:13.8px;font-size:6.9px;color:#444;">Q</div>
<div class="b" style="left:664.24px;top:112.4px;width:0.8px;height:15.199999999999989px;background:#c9c9c9"></div>
<div class="t" style="left:446.57500000000005px;width:400px;text-align:center;top:115.6px;line-height:13.8px;font-size:6.9px;color:#444;">R</div>
<div class="b" style="left:700.37px;top:112.4px;width:0.8px;height:15.199999999999989px;background:#c9c9c9"></div>
<div class="t" style="left:482.70500000000004px;width:400px;text-align:center;top:115.6px;line-height:13.8px;font-size:6.9px;color:#444;">S</div>
<div class="b" style="left:736.5px;top:112.4px;width:0.8px;height:15.199999999999989px;background:#c9c9c9"></div>
<div class="t" style="left:518.835px;width:400px;text-align:center;top:115.6px;line-height:13.8px;font-size:6.9px;color:#444;">T</div>
<div class="b" style="left:772.63px;top:112.4px;width:0.8px;height:15.199999999999989px;background:#c9c9c9"></div>
<div class="t" style="left:554.965px;width:400px;text-align:center;top:115.6px;line-height:13.8px;font-size:6.9px;color:#444;">U</div>
<div class="b" style="left:808.76px;top:112.4px;width:0.8px;height:15.199999999999989px;background:#c9c9c9"></div>
<div class="t" style="left:591.095px;width:400px;text-align:center;top:115.6px;line-height:13.8px;font-size:6.9px;color:#444;">V</div>
<div class="b" style="left:844.89px;top:112.4px;width:0.8px;height:15.199999999999989px;background:#c9c9c9"></div>
<div class="t" style="left:627.225px;width:400px;text-align:center;top:115.6px;line-height:13.8px;font-size:6.9px;color:#444;">W</div>
<div class="b" style="left:881.02px;top:112.4px;width:0.8px;height:15.199999999999989px;background:#c9c9c9"></div>
<div class="t" style="left:663.355px;width:400px;text-align:center;top:115.6px;line-height:13.8px;font-size:6.9px;color:#444;">X</div>
<div class="b" style="left:917.1500000000001px;top:112.4px;width:0.8px;height:15.199999999999989px;background:#c9c9c9"></div>
<div class="t" style="left:699.4850000000001px;width:400px;text-align:center;top:115.6px;line-height:13.8px;font-size:6.9px;color:#444;">Y</div>
<div class="b" style="left:953.2800000000001px;top:112.4px;width:0.8px;height:15.199999999999989px;background:#c9c9c9"></div>
<div class="t" style="left:735.6150000000001px;width:400px;text-align:center;top:115.6px;line-height:13.8px;font-size:6.9px;color:#444;">Z</div>
<div class="b" style="left:989.4100000000001px;top:112.4px;width:0.8px;height:15.199999999999989px;background:#c9c9c9"></div>
<div class="t" style="left:771.7450000000001px;width:400px;text-align:center;top:115.6px;line-height:13.8px;font-size:6.9px;color:#444;">AA</div>
<div class="b" style="left:1025.54px;top:112.4px;width:0.8px;height:15.199999999999989px;background:#c9c9c9"></div>
<div class="t" style="left:807.8750000000001px;width:400px;text-align:center;top:115.6px;line-height:13.8px;font-size:6.9px;color:#444;">AB</div>
<div class="b" style="left:0px;top:126.69999999999999px;width:1024px;height:0.9px;background:#c9c9c9"></div>
<div class="b" style="left:13.9px;top:115.6px;width:0.8px;height:12.0px;background:#c9c9c9"></div>
<div class="b" style="left:0px;top:127.6px;width:14.3px;height:392.4px;background:#dde1de"></div>
<div class="b" style="left:0px;top:138.48999999999998px;width:14.3px;height:0.8px;background:#cdd5cf"></div>
<div class="t" style="left:-192.7px;width:400px;text-align:center;top:127.445px;line-height:13.8px;font-size:6.9px;color:#4f5f55;">1</div>
<div class="b" style="left:0px;top:149.77999999999997px;width:14.3px;height:0.8px;background:#cdd5cf"></div>
<div class="t" style="left:-192.7px;width:400px;text-align:center;top:138.73499999999999px;line-height:13.8px;font-size:6.9px;color:#4f5f55;">2</div>
<div class="b" style="left:0px;top:161.07px;width:14.3px;height:0.8px;background:#cdd5cf"></div>
<div class="t" style="left:-192.7px;width:400px;text-align:center;top:150.025px;line-height:13.8px;font-size:6.9px;color:#4f5f55;">3</div>
<div class="b" style="left:0px;top:172.35999999999999px;width:14.3px;height:0.8px;background:#cdd5cf"></div>
<div class="t" style="left:-192.7px;width:400px;text-align:center;top:161.315px;line-height:13.8px;font-size:6.9px;color:#4f5f55;">4</div>
<div class="b" style="left:0px;top:183.64999999999998px;width:14.3px;height:0.8px;background:#cdd5cf"></div>
<div class="t" style="left:-192.7px;width:400px;text-align:center;top:172.605px;line-height:13.8px;font-size:6.9px;color:#4f5f55;">5</div>
<div class="b" style="left:0px;top:194.93999999999997px;width:14.3px;height:0.8px;background:#cdd5cf"></div>
<div class="t" style="left:-192.7px;width:400px;text-align:center;top:183.89499999999998px;line-height:13.8px;font-size:6.9px;color:#4f5f55;">6</div>
<div class="b" style="left:0px;top:206.22999999999996px;width:14.3px;height:0.8px;background:#cdd5cf"></div>
<div class="t" style="left:-192.7px;width:400px;text-align:center;top:195.18499999999997px;line-height:13.8px;font-size:6.9px;color:#4f5f55;">7</div>
<div class="b" style="left:0px;top:217.51999999999998px;width:14.3px;height:0.8px;background:#cdd5cf"></div>
<div class="t" style="left:-192.7px;width:400px;text-align:center;top:206.475px;line-height:13.8px;font-size:6.9px;color:#4f5f55;">8</div>
<div class="b" style="left:0px;top:228.80999999999997px;width:14.3px;height:0.8px;background:#cdd5cf"></div>
<div class="t" style="left:-192.7px;width:400px;text-align:center;top:217.765px;line-height:13.8px;font-size:6.9px;color:#4f5f55;">9</div>
<div class="b" style="left:0px;top:240.09999999999997px;width:14.3px;height:0.8px;background:#cdd5cf"></div>
<div class="t" style="left:-192.7px;width:400px;text-align:center;top:229.05499999999998px;line-height:13.8px;font-size:6.9px;color:#4f5f55;">10</div>
<div class="b" style="left:0px;top:251.39px;width:14.3px;height:0.8px;background:#cdd5cf"></div>
<div class="t" style="left:-192.7px;width:400px;text-align:center;top:240.345px;line-height:13.8px;font-size:6.9px;color:#4f5f55;">11</div>
<div class="b" style="left:0px;top:262.68px;width:14.3px;height:0.8px;background:#cdd5cf"></div>
<div class="t" style="left:-192.7px;width:400px;text-align:center;top:251.63500000000002px;line-height:13.8px;font-size:6.9px;color:#4f5f55;">12</div>
<div class="b" style="left:0px;top:273.97px;width:14.3px;height:0.8px;background:#cdd5cf"></div>
<div class="t" style="left:-192.7px;width:400px;text-align:center;top:262.925px;line-height:13.8px;font-size:6.9px;color:#4f5f55;">13</div>
<div class="b" style="left:0px;top:285.26000000000005px;width:14.3px;height:0.8px;background:#cdd5cf"></div>
<div class="t" style="left:-192.7px;width:400px;text-align:center;top:274.21500000000003px;line-height:13.8px;font-size:6.9px;color:#4f5f55;">14</div>
<div class="b" style="left:0px;top:296.55px;width:14.3px;height:0.8px;background:#cdd5cf"></div>
<div class="t" style="left:-192.7px;width:400px;text-align:center;top:285.505px;line-height:13.8px;font-size:6.9px;color:#4f5f55;">15</div>
<div class="b" style="left:0px;top:307.84000000000003px;width:14.3px;height:0.8px;background:#cdd5cf"></div>
<div class="t" style="left:-192.7px;width:400px;text-align:center;top:296.795px;line-height:13.8px;font-size:6.9px;color:#4f5f55;">16</div>
<div class="b" style="left:0px;top:319.13000000000005px;width:14.3px;height:0.8px;background:#cdd5cf"></div>
<div class="t" style="left:-192.7px;width:400px;text-align:center;top:308.08500000000004px;line-height:13.8px;font-size:6.9px;color:#4f5f55;">17</div>
<div class="b" style="left:0px;top:330.42px;width:14.3px;height:0.8px;background:#cdd5cf"></div>
<div class="t" style="left:-192.7px;width:400px;text-align:center;top:319.375px;line-height:13.8px;font-size:6.9px;color:#4f5f55;">18</div>
<div class="b" style="left:0px;top:341.71px;width:14.3px;height:0.8px;background:#cdd5cf"></div>
<div class="t" style="left:-192.7px;width:400px;text-align:center;top:330.66499999999996px;line-height:13.8px;font-size:6.9px;color:#4f5f55;">19</div>
<div class="b" style="left:0px;top:353.00000000000006px;width:14.3px;height:0.8px;background:#cdd5cf"></div>
<div class="t" style="left:-192.7px;width:400px;text-align:center;top:341.95500000000004px;line-height:13.8px;font-size:6.9px;color:#4f5f55;">20</div>
<div class="b" style="left:0px;top:364.29px;width:14.3px;height:0.8px;background:#cdd5cf"></div>
<div class="t" style="left:-192.7px;width:400px;text-align:center;top:353.245px;line-height:13.8px;font-size:6.9px;color:#4f5f55;">21</div>
<div class="b" style="left:0px;top:375.58px;width:14.3px;height:0.8px;background:#cdd5cf"></div>
<div class="t" style="left:-192.7px;width:400px;text-align:center;top:364.53499999999997px;line-height:13.8px;font-size:6.9px;color:#4f5f55;">22</div>
<div class="b" style="left:0px;top:386.87000000000006px;width:14.3px;height:0.8px;background:#cdd5cf"></div>
<div class="t" style="left:-192.7px;width:400px;text-align:center;top:375.82500000000005px;line-height:13.8px;font-size:6.9px;color:#4f5f55;">23</div>
<div class="b" style="left:0px;top:398.16px;width:14.3px;height:0.8px;background:#cdd5cf"></div>
<div class="t" style="left:-192.7px;width:400px;text-align:center;top:387.115px;line-height:13.8px;font-size:6.9px;color:#4f5f55;">24</div>
<div class="b" style="left:0px;top:409.45px;width:14.3px;height:0.8px;background:#cdd5cf"></div>
<div class="t" style="left:-192.7px;width:400px;text-align:center;top:398.405px;line-height:13.8px;font-size:6.9px;color:#4f5f55;">25</div>
<div class="b" style="left:0px;top:420.74000000000007px;width:14.3px;height:0.8px;background:#cdd5cf"></div>
<div class="t" style="left:-192.7px;width:400px;text-align:center;top:409.69500000000005px;line-height:13.8px;font-size:6.9px;color:#4f5f55;">26</div>
<div class="b" style="left:0px;top:432.03000000000003px;width:14.3px;height:0.8px;background:#cdd5cf"></div>
<div class="t" style="left:-192.7px;width:400px;text-align:center;top:420.985px;line-height:13.8px;font-size:6.9px;color:#4f5f55;">27</div>
<div class="b" style="left:0px;top:443.32px;width:14.3px;height:0.8px;background:#cdd5cf"></div>
<div class="t" style="left:-192.7px;width:400px;text-align:center;top:432.275px;line-height:13.8px;font-size:6.9px;color:#4f5f55;">28</div>
<div class="b" style="left:0px;top:454.61000000000007px;width:14.3px;height:0.8px;background:#cdd5cf"></div>
<div class="t" style="left:-192.7px;width:400px;text-align:center;top:443.56500000000005px;line-height:13.8px;font-size:6.9px;color:#4f5f55;">29</div>
<div class="b" style="left:0px;top:465.90000000000003px;width:14.3px;height:0.8px;background:#cdd5cf"></div>
<div class="t" style="left:-192.7px;width:400px;text-align:center;top:454.855px;line-height:13.8px;font-size:6.9px;color:#4f5f55;">30</div>
<div class="b" style="left:0px;top:477.19px;width:14.3px;height:0.8px;background:#cdd5cf"></div>
<div class="t" style="left:-192.7px;width:400px;text-align:center;top:466.145px;line-height:13.8px;font-size:6.9px;color:#4f5f55;">31</div>
<div class="b" style="left:0px;top:488.47999999999996px;width:14.3px;height:0.8px;background:#cdd5cf"></div>
<div class="t" style="left:-192.7px;width:400px;text-align:center;top:477.43499999999995px;line-height:13.8px;font-size:6.9px;color:#4f5f55;">32</div>
<div class="b" style="left:0px;top:499.77000000000004px;width:14.3px;height:0.8px;background:#cdd5cf"></div>
<div class="t" style="left:-192.7px;width:400px;text-align:center;top:488.725px;line-height:13.8px;font-size:6.9px;color:#4f5f55;">33</div>
<div class="b" style="left:0px;top:511.06px;width:14.3px;height:0.8px;background:#cdd5cf"></div>
<div class="t" style="left:-192.7px;width:400px;text-align:center;top:500.015px;line-height:13.8px;font-size:6.9px;color:#4f5f55;">34</div>
<div class="b" style="left:0px;top:522.3499999999999px;width:14.3px;height:0.8px;background:#cdd5cf"></div>
<div class="t" style="left:-192.7px;width:400px;text-align:center;top:511.30499999999995px;line-height:13.8px;font-size:6.9px;color:#4f5f55;">35</div>
<div class="b" style="left:14.3px;top:127.6px;width:1009.7px;height:392.4px;background:#fff"></div>
<div class="b" style="left:14.3px;top:127.6px;width:325.17px;height:392.4px;background:#cbcbcb"></div>
<div class="b" style="left:339.47px;top:138.48999999999998px;width:1024px;height:0.8px;background:#e1e1e1"></div>
<div class="b" style="left:14.3px;top:138.48999999999998px;width:325.17px;height:0.8px;background:#c4c4c4"></div>
<div class="b" style="left:339.47px;top:149.77999999999997px;width:1024px;height:0.8px;background:#e1e1e1"></div>
<div class="b" style="left:14.3px;top:149.77999999999997px;width:325.17px;height:0.8px;background:#c4c4c4"></div>
<div class="b" style="left:339.47px;top:161.07px;width:1024px;height:0.8px;background:#e1e1e1"></div>
<div class="b" style="left:14.3px;top:161.07px;width:325.17px;height:0.8px;background:#c4c4c4"></div>
<div class="b" style="left:339.47px;top:172.35999999999999px;width:1024px;height:0.8px;background:#e1e1e1"></div>
<div class="b" style="left:14.3px;top:172.35999999999999px;width:325.17px;height:0.8px;background:#c4c4c4"></div>
<div class="b" style="left:339.47px;top:183.64999999999998px;width:1024px;height:0.8px;background:#e1e1e1"></div>
<div class="b" style="left:14.3px;top:183.64999999999998px;width:325.17px;height:0.8px;background:#c4c4c4"></div>
<div class="b" style="left:339.47px;top:194.93999999999997px;width:1024px;height:0.8px;background:#e1e1e1"></div>
<div class="b" style="left:14.3px;top:194.93999999999997px;width:325.17px;height:0.8px;background:#c4c4c4"></div>
<div class="b" style="left:339.47px;top:206.22999999999996px;width:1024px;height:0.8px;background:#e1e1e1"></div>
<div class="b" style="left:14.3px;top:206.22999999999996px;width:325.17px;height:0.8px;background:#c4c4c4"></div>
<div class="b" style="left:339.47px;top:217.51999999999998px;width:1024px;height:0.8px;background:#e1e1e1"></div>
<div class="b" style="left:14.3px;top:217.51999999999998px;width:325.17px;height:0.8px;background:#c4c4c4"></div>
<div class="b" style="left:339.47px;top:228.80999999999997px;width:1024px;height:0.8px;background:#e1e1e1"></div>
<div class="b" style="left:14.3px;top:228.80999999999997px;width:325.17px;height:0.8px;background:#c4c4c4"></div>
<div class="b" style="left:339.47px;top:240.09999999999997px;width:1024px;height:0.8px;background:#e1e1e1"></div>
<div class="b" style="left:14.3px;top:240.09999999999997px;width:325.17px;height:0.8px;background:#c4c4c4"></div>
<div class="b" style="left:339.47px;top:251.39px;width:1024px;height:0.8px;background:#e1e1e1"></div>
<div class="b" style="left:14.3px;top:251.39px;width:325.17px;height:0.8px;background:#c4c4c4"></div>
<div class="b" style="left:339.47px;top:262.68px;width:1024px;height:0.8px;background:#e1e1e1"></div>
<div class="b" style="left:14.3px;top:262.68px;width:325.17px;height:0.8px;background:#c4c4c4"></div>
<div class="b" style="left:339.47px;top:273.97px;width:1024px;height:0.8px;background:#e1e1e1"></div>
<div class="b" style="left:14.3px;top:273.97px;width:325.17px;height:0.8px;background:#c4c4c4"></div>
<div class="b" style="left:339.47px;top:285.26000000000005px;width:1024px;height:0.8px;background:#e1e1e1"></div>
<div class="b" style="left:14.3px;top:285.26000000000005px;width:325.17px;height:0.8px;background:#c4c4c4"></div>
<div class="b" style="left:339.47px;top:296.55px;width:1024px;height:0.8px;background:#e1e1e1"></div>
<div class="b" style="left:14.3px;top:296.55px;width:325.17px;height:0.8px;background:#c4c4c4"></div>
<div class="b" style="left:339.47px;top:307.84000000000003px;width:1024px;height:0.8px;background:#e1e1e1"></div>
<div class="b" style="left:14.3px;top:307.84000000000003px;width:325.17px;height:0.8px;background:#c4c4c4"></div>
<div class="b" style="left:339.47px;top:319.13000000000005px;width:1024px;height:0.8px;background:#e1e1e1"></div>
<div class="b" style="left:14.3px;top:319.13000000000005px;width:325.17px;height:0.8px;background:#c4c4c4"></div>
<div class="b" style="left:339.47px;top:330.42px;width:1024px;height:0.8px;background:#e1e1e1"></div>
<div class="b" style="left:14.3px;top:330.42px;width:325.17px;height:0.8px;background:#c4c4c4"></div>
<div class="b" style="left:339.47px;top:341.71px;width:1024px;height:0.8px;background:#e1e1e1"></div>
<div class="b" style="left:14.3px;top:341.71px;width:325.17px;height:0.8px;background:#c4c4c4"></div>
<div class="b" style="left:339.47px;top:353.00000000000006px;width:1024px;height:0.8px;background:#e1e1e1"></div>
<div class="b" style="left:14.3px;top:353.00000000000006px;width:325.17px;height:0.8px;background:#c4c4c4"></div>
<div class="b" style="left:339.47px;top:364.29px;width:1024px;height:0.8px;background:#e1e1e1"></div>
<div class="b" style="left:14.3px;top:364.29px;width:325.17px;height:0.8px;background:#c4c4c4"></div>
<div class="b" style="left:339.47px;top:375.58px;width:1024px;height:0.8px;background:#e1e1e1"></div>
<div class="b" style="left:14.3px;top:375.58px;width:325.17px;height:0.8px;background:#c4c4c4"></div>
<div class="b" style="left:339.47px;top:386.87000000000006px;width:1024px;height:0.8px;background:#e1e1e1"></div>
<div class="b" style="left:14.3px;top:386.87000000000006px;width:325.17px;height:0.8px;background:#c4c4c4"></div>
<div class="b" style="left:339.47px;top:398.16px;width:1024px;height:0.8px;background:#e1e1e1"></div>
<div class="b" style="left:14.3px;top:398.16px;width:325.17px;height:0.8px;background:#c4c4c4"></div>
<div class="b" style="left:339.47px;top:409.45px;width:1024px;height:0.8px;background:#e1e1e1"></div>
<div class="b" style="left:14.3px;top:409.45px;width:325.17px;height:0.8px;background:#c4c4c4"></div>
<div class="b" style="left:339.47px;top:420.74000000000007px;width:1024px;height:0.8px;background:#e1e1e1"></div>
<div class="b" style="left:14.3px;top:420.74000000000007px;width:325.17px;height:0.8px;background:#c4c4c4"></div>
<div class="b" style="left:339.47px;top:432.03000000000003px;width:1024px;height:0.8px;background:#e1e1e1"></div>
<div class="b" style="left:14.3px;top:432.03000000000003px;width:325.17px;height:0.8px;background:#c4c4c4"></div>
<div class="b" style="left:339.47px;top:443.32px;width:1024px;height:0.8px;background:#e1e1e1"></div>
<div class="b" style="left:14.3px;top:443.32px;width:325.17px;height:0.8px;background:#c4c4c4"></div>
<div class="b" style="left:339.47px;top:454.61000000000007px;width:1024px;height:0.8px;background:#e1e1e1"></div>
<div class="b" style="left:14.3px;top:454.61000000000007px;width:325.17px;height:0.8px;background:#c4c4c4"></div>
<div class="b" style="left:339.47px;top:465.90000000000003px;width:1024px;height:0.8px;background:#e1e1e1"></div>
<div class="b" style="left:14.3px;top:465.90000000000003px;width:325.17px;height:0.8px;background:#c4c4c4"></div>
<div class="b" style="left:339.47px;top:477.19px;width:1024px;height:0.8px;background:#e1e1e1"></div>
<div class="b" style="left:14.3px;top:477.19px;width:325.17px;height:0.8px;background:#c4c4c4"></div>
<div class="b" style="left:339.47px;top:488.47999999999996px;width:1024px;height:0.8px;background:#e1e1e1"></div>
<div class="b" style="left:14.3px;top:488.47999999999996px;width:325.17px;height:0.8px;background:#c4c4c4"></div>
<div class="b" style="left:339.47px;top:499.77000000000004px;width:1024px;height:0.8px;background:#e1e1e1"></div>
<div class="b" style="left:14.3px;top:499.77000000000004px;width:325.17px;height:0.8px;background:#c4c4c4"></div>
<div class="b" style="left:339.47px;top:511.06px;width:1024px;height:0.8px;background:#e1e1e1"></div>
<div class="b" style="left:14.3px;top:511.06px;width:325.17px;height:0.8px;background:#c4c4c4"></div>
<div class="b" style="left:339.47px;top:522.3499999999999px;width:1024px;height:0.8px;background:#e1e1e1"></div>
<div class="b" style="left:14.3px;top:522.3499999999999px;width:325.17px;height:0.8px;background:#c4c4c4"></div>
<div class="b" style="left:339.47px;top:533.64px;width:1024px;height:0.8px;background:#e1e1e1"></div>
<div class="b" style="left:14.3px;top:533.64px;width:325.17px;height:0.8px;background:#c4c4c4"></div>
<div class="b" style="left:50.03000000000001px;top:127.6px;width:0.8px;height:392.4px;background:#c4c4c4"></div>
<div class="b" style="left:86.16px;top:127.6px;width:0.8px;height:392.4px;background:#c4c4c4"></div>
<div class="b" style="left:122.29px;top:127.6px;width:0.8px;height:392.4px;background:#c4c4c4"></div>
<div class="b" style="left:158.42000000000002px;top:127.6px;width:0.8px;height:392.4px;background:#c4c4c4"></div>
<div class="b" style="left:194.55px;top:127.6px;width:0.8px;height:392.4px;background:#c4c4c4"></div>
<div class="b" style="left:230.68000000000004px;top:127.6px;width:0.8px;height:392.4px;background:#c4c4c4"></div>
<div class="b" style="left:266.81000000000006px;top:127.6px;width:0.8px;height:392.4px;background:#c4c4c4"></div>
<div class="b" style="left:302.94000000000005px;top:127.6px;width:0.8px;height:392.4px;background:#c4c4c4"></div>
<div class="b" style="left:339.07000000000005px;top:127.6px;width:0.8px;height:392.4px;background:#e1e1e1"></div>
<div class="b" style="left:375.20000000000005px;top:127.6px;width:0.8px;height:392.4px;background:#e1e1e1"></div>
<div class="b" style="left:411.33000000000004px;top:127.6px;width:0.8px;height:392.4px;background:#e1e1e1"></div>
<div class="b" style="left:447.4600000000001px;top:127.6px;width:0.8px;height:392.4px;background:#e1e1e1"></div>
<div class="b" style="left:483.5900000000001px;top:127.6px;width:0.8px;height:392.4px;background:#e1e1e1"></div>
<div class="b" style="left:519.72px;top:127.6px;width:0.8px;height:392.4px;background:#e1e1e1"></div>
<div class="b" style="left:555.85px;top:127.6px;width:0.8px;height:392.4px;background:#e1e1e1"></div>
<div class="b" style="left:591.98px;top:127.6px;width:0.8px;height:392.4px;background:#e1e1e1"></div>
<div class="b" style="left:628.11px;top:127.6px;width:0.8px;height:392.4px;background:#e1e1e1"></div>
<div class="b" style="left:664.24px;top:127.6px;width:0.8px;height:392.4px;background:#e1e1e1"></div>
<div class="b" style="left:700.37px;top:127.6px;width:0.8px;height:392.4px;background:#e1e1e1"></div>
<div class="b" style="left:736.5px;top:127.6px;width:0.8px;height:392.4px;background:#e1e1e1"></div>
<div class="b" style="left:772.63px;top:127.6px;width:0.8px;height:392.4px;background:#e1e1e1"></div>
<div class="b" style="left:808.76px;top:127.6px;width:0.8px;height:392.4px;background:#e1e1e1"></div>
<div class="b" style="left:844.89px;top:127.6px;width:0.8px;height:392.4px;background:#e1e1e1"></div>
<div class="b" style="left:881.0200000000001px;top:127.6px;width:0.8px;height:392.4px;background:#e1e1e1"></div>
<div class="b" style="left:917.1500000000001px;top:127.6px;width:0.8px;height:392.4px;background:#e1e1e1"></div>
<div class="b" style="left:953.2800000000001px;top:127.6px;width:0.8px;height:392.4px;background:#e1e1e1"></div>
<div class="b" style="left:989.4100000000001px;top:127.6px;width:0.8px;height:392.4px;background:#e1e1e1"></div>
<div class="b" style="left:15.3px;top:128.1px;width:34.730000000000004px;height:10.389999999999999px;background:#fff"></div>
<div class="t" style="left:16.0px;top:126.94500000000002px;line-height:15.2px;font-size:7.6px;color:#262626;-webkit-text-stroke:0.1px #262626">ILoad</div>
<div class="t" style="left:52.13000000000001px;top:126.94500000000002px;line-height:15.2px;font-size:7.6px;color:#262626;-webkit-text-stroke:0.1px #262626">VIn</div>
<div class="t" style="left:88.26px;top:126.94500000000002px;line-height:15.2px;font-size:7.6px;color:#262626;-webkit-text-stroke:0.1px #262626">IIn</div>
<div class="t" style="left:124.39000000000001px;top:126.94500000000002px;line-height:15.2px;font-size:7.6px;color:#262626;-webkit-text-stroke:0.1px #262626">PIn</div>
<div class="t" style="left:160.52px;top:126.94500000000002px;line-height:15.2px;font-size:7.6px;color:#262626;-webkit-text-stroke:0.1px #262626">VOut</div>
<div class="t" style="left:196.65px;top:126.94500000000002px;line-height:15.2px;font-size:7.6px;color:#262626;-webkit-text-stroke:0.1px #262626">IOut</div>
<div class="t" style="left:232.78000000000003px;top:126.94500000000002px;line-height:15.2px;font-size:7.6px;color:#262626;-webkit-text-stroke:0.1px #262626">POut</div>
<div class="t" style="left:268.91px;top:126.94500000000002px;line-height:15.2px;font-size:7.6px;color:#262626;-webkit-text-stroke:0.1px #262626">Pd</div>
<div class="t" style="left:305.04px;top:126.94500000000002px;line-height:15.2px;font-size:7.6px;color:#262626;-webkit-text-stroke:0.1px #262626">Efficiency</div>
<div class="t" style="right:974.87px;top:138.235px;line-height:15.2px;font-size:7.6px;color:#262626;transform:scaleX(0.89);transform-origin:100% 0;-webkit-text-stroke:0.1px #262626">0</div>
<div class="t" style="right:938.74px;top:138.235px;line-height:15.2px;font-size:7.6px;color:#262626;transform:scaleX(0.89);transform-origin:100% 0;-webkit-text-stroke:0.1px #262626">5.00E+00</div>
<div class="t" style="right:902.61px;top:138.235px;line-height:15.2px;font-size:7.6px;color:#262626;transform:scaleX(0.89);transform-origin:100% 0;-webkit-text-stroke:0.1px #262626">1.34E-01</div>
<div class="t" style="right:866.48px;top:138.235px;line-height:15.2px;font-size:7.6px;color:#262626;transform:scaleX(0.89);transform-origin:100% 0;-webkit-text-stroke:0.1px #262626">0.671997</div>
<div class="t" style="right:830.35px;top:138.235px;line-height:15.2px;font-size:7.6px;color:#262626;transform:scaleX(0.89);transform-origin:100% 0;-webkit-text-stroke:0.1px #262626">1.20E+00</div>
<div class="t" style="right:794.22px;top:138.235px;line-height:15.2px;font-size:7.6px;color:#262626;transform:scaleX(0.89);transform-origin:100% 0;-webkit-text-stroke:0.1px #262626">5.91E-06</div>
<div class="t" style="right:758.0899999999999px;top:138.235px;line-height:15.2px;font-size:7.6px;color:#262626;transform:scaleX(0.89);transform-origin:100% 0;-webkit-text-stroke:0.1px #262626">7.07E-06</div>
<div class="t" style="right:721.96px;top:138.235px;line-height:15.2px;font-size:7.6px;color:#262626;transform:scaleX(0.89);transform-origin:100% 0;-webkit-text-stroke:0.1px #262626">0.67199</div>
<div class="t" style="right:685.8299999999999px;top:138.235px;line-height:15.2px;font-size:7.6px;color:#262626;transform:scaleX(0.89);transform-origin:100% 0;-webkit-text-stroke:0.1px #262626">0.00%</div>
<div class="t" style="right:974.87px;top:149.52500000000003px;line-height:15.2px;font-size:7.6px;color:#262626;transform:scaleX(0.89);transform-origin:100% 0;-webkit-text-stroke:0.1px #262626">0.1</div>
<div class="t" style="right:938.74px;top:149.52500000000003px;line-height:15.2px;font-size:7.6px;color:#262626;transform:scaleX(0.89);transform-origin:100% 0;-webkit-text-stroke:0.1px #262626">5.00E+00</div>
<div class="t" style="right:902.61px;top:149.52500000000003px;line-height:15.2px;font-size:7.6px;color:#262626;transform:scaleX(0.89);transform-origin:100% 0;-webkit-text-stroke:0.1px #262626">1.57E-01</div>
<div class="t" style="right:866.48px;top:149.52500000000003px;line-height:15.2px;font-size:7.6px;color:#262626;transform:scaleX(0.89);transform-origin:100% 0;-webkit-text-stroke:0.1px #262626">0.784052</div>
<div class="t" style="right:830.35px;top:149.52500000000003px;line-height:15.2px;font-size:7.6px;color:#262626;transform:scaleX(0.89);transform-origin:100% 0;-webkit-text-stroke:0.1px #262626">1.20E+00</div>
<div class="t" style="right:794.22px;top:149.52500000000003px;line-height:15.2px;font-size:7.6px;color:#262626;transform:scaleX(0.89);transform-origin:100% 0;-webkit-text-stroke:0.1px #262626">9.33E-02</div>
<div class="t" style="right:758.0899999999999px;top:149.52500000000003px;line-height:15.2px;font-size:7.6px;color:#262626;transform:scaleX(0.89);transform-origin:100% 0;-webkit-text-stroke:0.1px #262626">0.111594</div>
<div class="t" style="right:721.96px;top:149.52500000000003px;line-height:15.2px;font-size:7.6px;color:#262626;transform:scaleX(0.89);transform-origin:100% 0;-webkit-text-stroke:0.1px #262626">0.672458</div>
<div class="t" style="right:685.8299999999999px;top:149.52500000000003px;line-height:15.2px;font-size:7.6px;color:#262626;transform:scaleX(0.89);transform-origin:100% 0;-webkit-text-stroke:0.1px #262626">14.23%</div>
<div class="t" style="right:974.87px;top:160.81500000000003px;line-height:15.2px;font-size:7.6px;color:#262626;transform:scaleX(0.89);transform-origin:100% 0;-webkit-text-stroke:0.1px #262626">0.2</div>
<div class="t" style="right:938.74px;top:160.81500000000003px;line-height:15.2px;font-size:7.6px;color:#262626;transform:scaleX(0.89);transform-origin:100% 0;-webkit-text-stroke:0.1px #262626">5.00E+00</div>
<div class="t" style="right:902.61px;top:160.81500000000003px;line-height:15.2px;font-size:7.6px;color:#262626;transform:scaleX(0.89);transform-origin:100% 0;-webkit-text-stroke:0.1px #262626">1.81E-01</div>
<div class="t" style="right:866.48px;top:160.81500000000003px;line-height:15.2px;font-size:7.6px;color:#262626;transform:scaleX(0.89);transform-origin:100% 0;-webkit-text-stroke:0.1px #262626">0.904555</div>
<div class="t" style="right:830.35px;top:160.81500000000003px;line-height:15.2px;font-size:7.6px;color:#262626;transform:scaleX(0.89);transform-origin:100% 0;-webkit-text-stroke:0.1px #262626">1.20E+00</div>
<div class="t" style="right:794.22px;top:160.81500000000003px;line-height:15.2px;font-size:7.6px;color:#262626;transform:scaleX(0.89);transform-origin:100% 0;-webkit-text-stroke:0.1px #262626">1.94E-01</div>
<div class="t" style="right:758.0899999999999px;top:160.81500000000003px;line-height:15.2px;font-size:7.6px;color:#262626;transform:scaleX(0.89);transform-origin:100% 0;-webkit-text-stroke:0.1px #262626">0.231516</div>
<div class="t" style="right:721.96px;top:160.81500000000003px;line-height:15.2px;font-size:7.6px;color:#262626;transform:scaleX(0.89);transform-origin:100% 0;-webkit-text-stroke:0.1px #262626">0.673039</div>
<div class="t" style="right:685.8299999999999px;top:160.81500000000003px;line-height:15.2px;font-size:7.6px;color:#262626;transform:scaleX(0.89);transform-origin:100% 0;-webkit-text-stroke:0.1px #262626">25.59%</div>
<div class="t" style="right:974.87px;top:172.10500000000002px;line-height:15.2px;font-size:7.6px;color:#262626;transform:scaleX(0.89);transform-origin:100% 0;-webkit-text-stroke:0.1px #262626">0.3</div>
<div class="t" style="right:938.74px;top:172.10500000000002px;line-height:15.2px;font-size:7.6px;color:#262626;transform:scaleX(0.89);transform-origin:100% 0;-webkit-text-stroke:0.1px #262626">5.00E+00</div>
<div class="t" style="right:902.61px;top:172.10500000000002px;line-height:15.2px;font-size:7.6px;color:#262626;transform:scaleX(0.89);transform-origin:100% 0;-webkit-text-stroke:0.1px #262626">2.05E-01</div>
<div class="t" style="right:866.48px;top:172.10500000000002px;line-height:15.2px;font-size:7.6px;color:#262626;transform:scaleX(0.89);transform-origin:100% 0;-webkit-text-stroke:0.1px #262626">1.026208</div>
<div class="t" style="right:830.35px;top:172.10500000000002px;line-height:15.2px;font-size:7.6px;color:#262626;transform:scaleX(0.89);transform-origin:100% 0;-webkit-text-stroke:0.1px #262626">1.20E+00</div>
<div class="t" style="right:794.22px;top:172.10500000000002px;line-height:15.2px;font-size:7.6px;color:#262626;transform:scaleX(0.89);transform-origin:100% 0;-webkit-text-stroke:0.1px #262626">2.94E-01</div>
<div class="t" style="right:758.0899999999999px;top:172.10500000000002px;line-height:15.2px;font-size:7.6px;color:#262626;transform:scaleX(0.89);transform-origin:100% 0;-webkit-text-stroke:0.1px #262626">0.351182</div>
<div class="t" style="right:721.96px;top:172.10500000000002px;line-height:15.2px;font-size:7.6px;color:#262626;transform:scaleX(0.89);transform-origin:100% 0;-webkit-text-stroke:0.1px #262626">0.675026</div>
<div class="t" style="right:685.8299999999999px;top:172.10500000000002px;line-height:15.2px;font-size:7.6px;color:#262626;transform:scaleX(0.89);transform-origin:100% 0;-webkit-text-stroke:0.1px #262626">34.22%</div>
<div class="t" style="right:974.87px;top:183.395px;line-height:15.2px;font-size:7.6px;color:#262626;transform:scaleX(0.89);transform-origin:100% 0;-webkit-text-stroke:0.1px #262626">0.4</div>
<div class="t" style="right:938.74px;top:183.395px;line-height:15.2px;font-size:7.6px;color:#262626;transform:scaleX(0.89);transform-origin:100% 0;-webkit-text-stroke:0.1px #262626">5.00E+00</div>
<div class="t" style="right:902.61px;top:183.395px;line-height:15.2px;font-size:7.6px;color:#262626;transform:scaleX(0.89);transform-origin:100% 0;-webkit-text-stroke:0.1px #262626">2.29E-01</div>
<div class="t" style="right:866.48px;top:183.395px;line-height:15.2px;font-size:7.6px;color:#262626;transform:scaleX(0.89);transform-origin:100% 0;-webkit-text-stroke:0.1px #262626">1.147281</div>
<div class="t" style="right:830.35px;top:183.395px;line-height:15.2px;font-size:7.6px;color:#262626;transform:scaleX(0.89);transform-origin:100% 0;-webkit-text-stroke:0.1px #262626">1.20E+00</div>
<div class="t" style="right:794.22px;top:183.395px;line-height:15.2px;font-size:7.6px;color:#262626;transform:scaleX(0.89);transform-origin:100% 0;-webkit-text-stroke:0.1px #262626">3.94E-01</div>
<div class="t" style="right:758.0899999999999px;top:183.395px;line-height:15.2px;font-size:7.6px;color:#262626;transform:scaleX(0.89);transform-origin:100% 0;-webkit-text-stroke:0.1px #262626">0.471095</div>
<div class="t" style="right:721.96px;top:183.395px;line-height:15.2px;font-size:7.6px;color:#262626;transform:scaleX(0.89);transform-origin:100% 0;-webkit-text-stroke:0.1px #262626">0.676186</div>
<div class="t" style="right:685.8299999999999px;top:183.395px;line-height:15.2px;font-size:7.6px;color:#262626;transform:scaleX(0.89);transform-origin:100% 0;-webkit-text-stroke:0.1px #262626">41.06%</div>
<div class="t" style="right:974.87px;top:194.685px;line-height:15.2px;font-size:7.6px;color:#262626;transform:scaleX(0.89);transform-origin:100% 0;-webkit-text-stroke:0.1px #262626">0.5</div>
<div class="t" style="right:938.74px;top:194.685px;line-height:15.2px;font-size:7.6px;color:#262626;transform:scaleX(0.89);transform-origin:100% 0;-webkit-text-stroke:0.1px #262626">5.00E+00</div>
<div class="t" style="right:902.61px;top:194.685px;line-height:15.2px;font-size:7.6px;color:#262626;transform:scaleX(0.89);transform-origin:100% 0;-webkit-text-stroke:0.1px #262626">2.54E-01</div>
<div class="t" style="right:866.48px;top:194.685px;line-height:15.2px;font-size:7.6px;color:#262626;transform:scaleX(0.89);transform-origin:100% 0;-webkit-text-stroke:0.1px #262626">1.268324</div>
<div class="t" style="right:830.35px;top:194.685px;line-height:15.2px;font-size:7.6px;color:#262626;transform:scaleX(0.89);transform-origin:100% 0;-webkit-text-stroke:0.1px #262626">1.20E+00</div>
<div class="t" style="right:794.22px;top:194.685px;line-height:15.2px;font-size:7.6px;color:#262626;transform:scaleX(0.89);transform-origin:100% 0;-webkit-text-stroke:0.1px #262626">4.94E-01</div>
<div class="t" style="right:758.0899999999999px;top:194.685px;line-height:15.2px;font-size:7.6px;color:#262626;transform:scaleX(0.89);transform-origin:100% 0;-webkit-text-stroke:0.1px #262626">0.590596</div>
<div class="t" style="right:721.96px;top:194.685px;line-height:15.2px;font-size:7.6px;color:#262626;transform:scaleX(0.89);transform-origin:100% 0;-webkit-text-stroke:0.1px #262626">0.677729</div>
<div class="t" style="right:685.8299999999999px;top:194.685px;line-height:15.2px;font-size:7.6px;color:#262626;transform:scaleX(0.89);transform-origin:100% 0;-webkit-text-stroke:0.1px #262626">46.57%</div>
<div class="t" style="right:974.87px;top:205.97500000000002px;line-height:15.2px;font-size:7.6px;color:#262626;transform:scaleX(0.89);transform-origin:100% 0;-webkit-text-stroke:0.1px #262626">0.6</div>
<div class="t" style="right:938.74px;top:205.97500000000002px;line-height:15.2px;font-size:7.6px;color:#262626;transform:scaleX(0.89);transform-origin:100% 0;-webkit-text-stroke:0.1px #262626">5.00E+00</div>
<div class="t" style="right:902.61px;top:205.97500000000002px;line-height:15.2px;font-size:7.6px;color:#262626;transform:scaleX(0.89);transform-origin:100% 0;-webkit-text-stroke:0.1px #262626">2.78E-01</div>
<div class="t" style="right:866.48px;top:205.97500000000002px;line-height:15.2px;font-size:7.6px;color:#262626;transform:scaleX(0.89);transform-origin:100% 0;-webkit-text-stroke:0.1px #262626">1.389602</div>
<div class="t" style="right:830.35px;top:205.97500000000002px;line-height:15.2px;font-size:7.6px;color:#262626;transform:scaleX(0.89);transform-origin:100% 0;-webkit-text-stroke:0.1px #262626">1.20E+00</div>
<div class="t" style="right:794.22px;top:205.97500000000002px;line-height:15.2px;font-size:7.6px;color:#262626;transform:scaleX(0.89);transform-origin:100% 0;-webkit-text-stroke:0.1px #262626">5.94E-01</div>
<div class="t" style="right:758.0899999999999px;top:205.97500000000002px;line-height:15.2px;font-size:7.6px;color:#262626;transform:scaleX(0.89);transform-origin:100% 0;-webkit-text-stroke:0.1px #262626">0.710075</div>
<div class="t" style="right:721.96px;top:205.97500000000002px;line-height:15.2px;font-size:7.6px;color:#262626;transform:scaleX(0.89);transform-origin:100% 0;-webkit-text-stroke:0.1px #262626">0.679527</div>
<div class="t" style="right:685.8299999999999px;top:205.97500000000002px;line-height:15.2px;font-size:7.6px;color:#262626;transform:scaleX(0.89);transform-origin:100% 0;-webkit-text-stroke:0.1px #262626">51.10%</div>
<div class="t" style="right:974.87px;top:217.26500000000001px;line-height:15.2px;font-size:7.6px;color:#262626;transform:scaleX(0.89);transform-origin:100% 0;-webkit-text-stroke:0.1px #262626">0.7</div>
<div class="t" style="right:938.74px;top:217.26500000000001px;line-height:15.2px;font-size:7.6px;color:#262626;transform:scaleX(0.89);transform-origin:100% 0;-webkit-text-stroke:0.1px #262626">5.00E+00</div>
<div class="t" style="right:902.61px;top:217.26500000000001px;line-height:15.2px;font-size:7.6px;color:#262626;transform:scaleX(0.89);transform-origin:100% 0;-webkit-text-stroke:0.1px #262626">3.02E-01</div>
<div class="t" style="right:866.48px;top:217.26500000000001px;line-height:15.2px;font-size:7.6px;color:#262626;transform:scaleX(0.89);transform-origin:100% 0;-webkit-text-stroke:0.1px #262626">1.511199</div>
<div class="t" style="right:830.35px;top:217.26500000000001px;line-height:15.2px;font-size:7.6px;color:#262626;transform:scaleX(0.89);transform-origin:100% 0;-webkit-text-stroke:0.1px #262626">1.20E+00</div>
<div class="t" style="right:794.22px;top:217.26500000000001px;line-height:15.2px;font-size:7.6px;color:#262626;transform:scaleX(0.89);transform-origin:100% 0;-webkit-text-stroke:0.1px #262626">6.94E-01</div>
<div class="t" style="right:758.0899999999999px;top:217.26500000000001px;line-height:15.2px;font-size:7.6px;color:#262626;transform:scaleX(0.89);transform-origin:100% 0;-webkit-text-stroke:0.1px #262626">0.829753</div>
<div class="t" style="right:721.96px;top:217.26500000000001px;line-height:15.2px;font-size:7.6px;color:#262626;transform:scaleX(0.89);transform-origin:100% 0;-webkit-text-stroke:0.1px #262626">0.681445</div>
<div class="t" style="right:685.8299999999999px;top:217.26500000000001px;line-height:15.2px;font-size:7.6px;color:#262626;transform:scaleX(0.89);transform-origin:100% 0;-webkit-text-stroke:0.1px #262626">54.91%</div>
<div class="t" style="right:974.87px;top:228.555px;line-height:15.2px;font-size:7.6px;color:#262626;transform:scaleX(0.89);transform-origin:100% 0;-webkit-text-stroke:0.1px #262626">0.8</div>
<div class="t" style="right:938.74px;top:228.555px;line-height:15.2px;font-size:7.6px;color:#262626;transform:scaleX(0.89);transform-origin:100% 0;-webkit-text-stroke:0.1px #262626">5.00E+00</div>
<div class="t" style="right:902.61px;top:228.555px;line-height:15.2px;font-size:7.6px;color:#262626;transform:scaleX(0.89);transform-origin:100% 0;-webkit-text-stroke:0.1px #262626">3.27E-01</div>
<div class="t" style="right:866.48px;top:228.555px;line-height:15.2px;font-size:7.6px;color:#262626;transform:scaleX(0.89);transform-origin:100% 0;-webkit-text-stroke:0.1px #262626">1.633044</div>
<div class="t" style="right:830.35px;top:228.555px;line-height:15.2px;font-size:7.6px;color:#262626;transform:scaleX(0.89);transform-origin:100% 0;-webkit-text-stroke:0.1px #262626">1.20E+00</div>
<div class="t" style="right:794.22px;top:228.555px;line-height:15.2px;font-size:7.6px;color:#262626;transform:scaleX(0.89);transform-origin:100% 0;-webkit-text-stroke:0.1px #262626">7.94E-01</div>
<div class="t" style="right:758.0899999999999px;top:228.555px;line-height:15.2px;font-size:7.6px;color:#262626;transform:scaleX(0.89);transform-origin:100% 0;-webkit-text-stroke:0.1px #262626">0.949343</div>
<div class="t" style="right:721.96px;top:228.555px;line-height:15.2px;font-size:7.6px;color:#262626;transform:scaleX(0.89);transform-origin:100% 0;-webkit-text-stroke:0.1px #262626">0.683701</div>
<div class="t" style="right:685.8299999999999px;top:228.555px;line-height:15.2px;font-size:7.6px;color:#262626;transform:scaleX(0.89);transform-origin:100% 0;-webkit-text-stroke:0.1px #262626">58.13%</div>
<div class="t" style="right:974.87px;top:239.84500000000003px;line-height:15.2px;font-size:7.6px;color:#262626;transform:scaleX(0.89);transform-origin:100% 0;-webkit-text-stroke:0.1px #262626">0.9</div>
<div class="t" style="right:938.74px;top:239.84500000000003px;line-height:15.2px;font-size:7.6px;color:#262626;transform:scaleX(0.89);transform-origin:100% 0;-webkit-text-stroke:0.1px #262626">5.00E+00</div>
<div class="t" style="right:902.61px;top:239.84500000000003px;line-height:15.2px;font-size:7.6px;color:#262626;transform:scaleX(0.89);transform-origin:100% 0;-webkit-text-stroke:0.1px #262626">3.51E-01</div>
<div class="t" style="right:866.48px;top:239.84500000000003px;line-height:15.2px;font-size:7.6px;color:#262626;transform:scaleX(0.89);transform-origin:100% 0;-webkit-text-stroke:0.1px #262626">1.755042</div>
<div class="t" style="right:830.35px;top:239.84500000000003px;line-height:15.2px;font-size:7.6px;color:#262626;transform:scaleX(0.89);transform-origin:100% 0;-webkit-text-stroke:0.1px #262626">1.19E+00</div>
<div class="t" style="right:794.22px;top:239.84500000000003px;line-height:15.2px;font-size:7.6px;color:#262626;transform:scaleX(0.89);transform-origin:100% 0;-webkit-text-stroke:0.1px #262626">8.94E-01</div>
<div class="t" style="right:758.0899999999999px;top:239.84500000000003px;line-height:15.2px;font-size:7.6px;color:#262626;transform:scaleX(0.89);transform-origin:100% 0;-webkit-text-stroke:0.1px #262626">1.068669</div>
<div class="t" style="right:721.96px;top:239.84500000000003px;line-height:15.2px;font-size:7.6px;color:#262626;transform:scaleX(0.89);transform-origin:100% 0;-webkit-text-stroke:0.1px #262626">0.686373</div>
<div class="t" style="right:685.8299999999999px;top:239.84500000000003px;line-height:15.2px;font-size:7.6px;color:#262626;transform:scaleX(0.89);transform-origin:100% 0;-webkit-text-stroke:0.1px #262626">60.89%</div>
<div class="t" style="right:974.87px;top:251.13500000000002px;line-height:15.2px;font-size:7.6px;color:#262626;transform:scaleX(0.89);transform-origin:100% 0;-webkit-text-stroke:0.1px #262626">1</div>
<div class="t" style="right:938.74px;top:251.13500000000002px;line-height:15.2px;font-size:7.6px;color:#262626;transform:scaleX(0.89);transform-origin:100% 0;-webkit-text-stroke:0.1px #262626">5.00E+00</div>
<div class="t" style="right:902.61px;top:251.13500000000002px;line-height:15.2px;font-size:7.6px;color:#262626;transform:scaleX(0.89);transform-origin:100% 0;-webkit-text-stroke:0.1px #262626">3.75E-01</div>
<div class="t" style="right:866.48px;top:251.13500000000002px;line-height:15.2px;font-size:7.6px;color:#262626;transform:scaleX(0.89);transform-origin:100% 0;-webkit-text-stroke:0.1px #262626">1.877324</div>
<div class="t" style="right:830.35px;top:251.13500000000002px;line-height:15.2px;font-size:7.6px;color:#262626;transform:scaleX(0.89);transform-origin:100% 0;-webkit-text-stroke:0.1px #262626">1.19E+00</div>
<div class="t" style="right:794.22px;top:251.13500000000002px;line-height:15.2px;font-size:7.6px;color:#262626;transform:scaleX(0.89);transform-origin:100% 0;-webkit-text-stroke:0.1px #262626">9.95E-01</div>
<div class="t" style="right:758.0899999999999px;top:251.13500000000002px;line-height:15.2px;font-size:7.6px;color:#262626;transform:scaleX(0.89);transform-origin:100% 0;-webkit-text-stroke:0.1px #262626">1.188238</div>
<div class="t" style="right:721.96px;top:251.13500000000002px;line-height:15.2px;font-size:7.6px;color:#262626;transform:scaleX(0.89);transform-origin:100% 0;-webkit-text-stroke:0.1px #262626">0.689087</div>
<div class="t" style="right:685.8299999999999px;top:251.13500000000002px;line-height:15.2px;font-size:7.6px;color:#262626;transform:scaleX(0.89);transform-origin:100% 0;-webkit-text-stroke:0.1px #262626">63.29%</div>
<div class="t" style="right:974.87px;top:262.42499999999995px;line-height:15.2px;font-size:7.6px;color:#262626;transform:scaleX(0.89);transform-origin:100% 0;-webkit-text-stroke:0.1px #262626">1.1</div>
<div class="t" style="right:938.74px;top:262.42499999999995px;line-height:15.2px;font-size:7.6px;color:#262626;transform:scaleX(0.89);transform-origin:100% 0;-webkit-text-stroke:0.1px #262626">5.00E+00</div>
<div class="t" style="right:902.61px;top:262.42499999999995px;line-height:15.2px;font-size:7.6px;color:#262626;transform:scaleX(0.89);transform-origin:100% 0;-webkit-text-stroke:0.1px #262626">4.00E-01</div>
<div class="t" style="right:866.48px;top:262.42499999999995px;line-height:15.2px;font-size:7.6px;color:#262626;transform:scaleX(0.89);transform-origin:100% 0;-webkit-text-stroke:0.1px #262626">2.000184</div>
<div class="t" style="right:830.35px;top:262.42499999999995px;line-height:15.2px;font-size:7.6px;color:#262626;transform:scaleX(0.89);transform-origin:100% 0;-webkit-text-stroke:0.1px #262626">1.19E+00</div>
<div class="t" style="right:794.22px;top:262.42499999999995px;line-height:15.2px;font-size:7.6px;color:#262626;transform:scaleX(0.89);transform-origin:100% 0;-webkit-text-stroke:0.1px #262626">1.09E+00</div>
<div class="t" style="right:758.0899999999999px;top:262.42499999999995px;line-height:15.2px;font-size:7.6px;color:#262626;transform:scaleX(0.89);transform-origin:100% 0;-webkit-text-stroke:0.1px #262626">1.30772</div>
<div class="t" style="right:721.96px;top:262.42499999999995px;line-height:15.2px;font-size:7.6px;color:#262626;transform:scaleX(0.89);transform-origin:100% 0;-webkit-text-stroke:0.1px #262626">0.692464</div>
<div class="t" style="right:685.8299999999999px;top:262.42499999999995px;line-height:15.2px;font-size:7.6px;color:#262626;transform:scaleX(0.89);transform-origin:100% 0;-webkit-text-stroke:0.1px #262626">65.38%</div>
<div class="t" style="right:974.87px;top:273.715px;line-height:15.2px;font-size:7.6px;color:#262626;transform:scaleX(0.89);transform-origin:100% 0;-webkit-text-stroke:0.1px #262626">1.2</div>
<div class="t" style="right:938.74px;top:273.715px;line-height:15.2px;font-size:7.6px;color:#262626;transform:scaleX(0.89);transform-origin:100% 0;-webkit-text-stroke:0.1px #262626">5.00E+00</div>
<div class="t" style="right:902.61px;top:273.715px;line-height:15.2px;font-size:7.6px;color:#262626;transform:scaleX(0.89);transform-origin:100% 0;-webkit-text-stroke:0.1px #262626">4.25E-01</div>
<div class="t" style="right:866.48px;top:273.715px;line-height:15.2px;font-size:7.6px;color:#262626;transform:scaleX(0.89);transform-origin:100% 0;-webkit-text-stroke:0.1px #262626">2.122919</div>
<div class="t" style="right:830.35px;top:273.715px;line-height:15.2px;font-size:7.6px;color:#262626;transform:scaleX(0.89);transform-origin:100% 0;-webkit-text-stroke:0.1px #262626">1.19E+00</div>
<div class="t" style="right:794.22px;top:273.715px;line-height:15.2px;font-size:7.6px;color:#262626;transform:scaleX(0.89);transform-origin:100% 0;-webkit-text-stroke:0.1px #262626">1.19E+00</div>
<div class="t" style="right:758.0899999999999px;top:273.715px;line-height:15.2px;font-size:7.6px;color:#262626;transform:scaleX(0.89);transform-origin:100% 0;-webkit-text-stroke:0.1px #262626">1.427102</div>
<div class="t" style="right:721.96px;top:273.715px;line-height:15.2px;font-size:7.6px;color:#262626;transform:scaleX(0.89);transform-origin:100% 0;-webkit-text-stroke:0.1px #262626">0.695818</div>
<div class="t" style="right:685.8299999999999px;top:273.715px;line-height:15.2px;font-size:7.6px;color:#262626;transform:scaleX(0.89);transform-origin:100% 0;-webkit-text-stroke:0.1px #262626">67.22%</div>
<div class="t" style="right:974.87px;top:285.00499999999994px;line-height:15.2px;font-size:7.6px;color:#262626;transform:scaleX(0.89);transform-origin:100% 0;-webkit-text-stroke:0.1px #262626">1.3</div>
<div class="t" style="right:938.74px;top:285.00499999999994px;line-height:15.2px;font-size:7.6px;color:#262626;transform:scaleX(0.89);transform-origin:100% 0;-webkit-text-stroke:0.1px #262626">5.00E+00</div>
<div class="t" style="right:902.61px;top:285.00499999999994px;line-height:15.2px;font-size:7.6px;color:#262626;transform:scaleX(0.89);transform-origin:100% 0;-webkit-text-stroke:0.1px #262626">4.49E-01</div>
<div class="t" style="right:866.48px;top:285.00499999999994px;line-height:15.2px;font-size:7.6px;color:#262626;transform:scaleX(0.89);transform-origin:100% 0;-webkit-text-stroke:0.1px #262626">2.245653</div>
<div class="t" style="right:830.35px;top:285.00499999999994px;line-height:15.2px;font-size:7.6px;color:#262626;transform:scaleX(0.89);transform-origin:100% 0;-webkit-text-stroke:0.1px #262626">1.19E+00</div>
<div class="t" style="right:794.22px;top:285.00499999999994px;line-height:15.2px;font-size:7.6px;color:#262626;transform:scaleX(0.89);transform-origin:100% 0;-webkit-text-stroke:0.1px #262626">1.29E+00</div>
<div class="t" style="right:758.0899999999999px;top:285.00499999999994px;line-height:15.2px;font-size:7.6px;color:#262626;transform:scaleX(0.89);transform-origin:100% 0;-webkit-text-stroke:0.1px #262626">1.546399</div>
<div class="t" style="right:721.96px;top:285.00499999999994px;line-height:15.2px;font-size:7.6px;color:#262626;transform:scaleX(0.89);transform-origin:100% 0;-webkit-text-stroke:0.1px #262626">0.699253</div>
<div class="t" style="right:685.8299999999999px;top:285.00499999999994px;line-height:15.2px;font-size:7.6px;color:#262626;transform:scaleX(0.89);transform-origin:100% 0;-webkit-text-stroke:0.1px #262626">68.86%</div>
<div class="t" style="right:974.87px;top:296.29499999999996px;line-height:15.2px;font-size:7.6px;color:#262626;transform:scaleX(0.89);transform-origin:100% 0;-webkit-text-stroke:0.1px #262626">1.4</div>
<div class="t" style="right:938.74px;top:296.29499999999996px;line-height:15.2px;font-size:7.6px;color:#262626;transform:scaleX(0.89);transform-origin:100% 0;-webkit-text-stroke:0.1px #262626">5.00E+00</div>
<div class="t" style="right:902.61px;top:296.29499999999996px;line-height:15.2px;font-size:7.6px;color:#262626;transform:scaleX(0.89);transform-origin:100% 0;-webkit-text-stroke:0.1px #262626">4.74E-01</div>
<div class="t" style="right:866.48px;top:296.29499999999996px;line-height:15.2px;font-size:7.6px;color:#262626;transform:scaleX(0.89);transform-origin:100% 0;-webkit-text-stroke:0.1px #262626">2.36933</div>
<div class="t" style="right:830.35px;top:296.29499999999996px;line-height:15.2px;font-size:7.6px;color:#262626;transform:scaleX(0.89);transform-origin:100% 0;-webkit-text-stroke:0.1px #262626">1.19E+00</div>
<div class="t" style="right:794.22px;top:296.29499999999996px;line-height:15.2px;font-size:7.6px;color:#262626;transform:scaleX(0.89);transform-origin:100% 0;-webkit-text-stroke:0.1px #262626">1.40E+00</div>
<div class="t" style="right:758.0899999999999px;top:296.29499999999996px;line-height:15.2px;font-size:7.6px;color:#262626;transform:scaleX(0.89);transform-origin:100% 0;-webkit-text-stroke:0.1px #262626">1.665803</div>
<div class="t" style="right:721.96px;top:296.29499999999996px;line-height:15.2px;font-size:7.6px;color:#262626;transform:scaleX(0.89);transform-origin:100% 0;-webkit-text-stroke:0.1px #262626">0.703527</div>
<div class="t" style="right:685.8299999999999px;top:296.29499999999996px;line-height:15.2px;font-size:7.6px;color:#262626;transform:scaleX(0.89);transform-origin:100% 0;-webkit-text-stroke:0.1px #262626">70.31%</div>
<div class="t" style="right:974.87px;top:307.585px;line-height:15.2px;font-size:7.6px;color:#262626;transform:scaleX(0.89);transform-origin:100% 0;-webkit-text-stroke:0.1px #262626">1.5</div>
<div class="t" style="right:938.74px;top:307.585px;line-height:15.2px;font-size:7.6px;color:#262626;transform:scaleX(0.89);transform-origin:100% 0;-webkit-text-stroke:0.1px #262626">5.00E+00</div>
<div class="t" style="right:902.61px;top:307.585px;line-height:15.2px;font-size:7.6px;color:#262626;transform:scaleX(0.89);transform-origin:100% 0;-webkit-text-stroke:0.1px #262626">4.99E-01</div>
<div class="t" style="right:866.48px;top:307.585px;line-height:15.2px;font-size:7.6px;color:#262626;transform:scaleX(0.89);transform-origin:100% 0;-webkit-text-stroke:0.1px #262626">2.49273</div>
<div class="t" style="right:830.35px;top:307.585px;line-height:15.2px;font-size:7.6px;color:#262626;transform:scaleX(0.89);transform-origin:100% 0;-webkit-text-stroke:0.1px #262626">1.19E+00</div>
<div class="t" style="right:794.22px;top:307.585px;line-height:15.2px;font-size:7.6px;color:#262626;transform:scaleX(0.89);transform-origin:100% 0;-webkit-text-stroke:0.1px #262626">1.50E+00</div>
<div class="t" style="right:758.0899999999999px;top:307.585px;line-height:15.2px;font-size:7.6px;color:#262626;transform:scaleX(0.89);transform-origin:100% 0;-webkit-text-stroke:0.1px #262626">1.785083</div>
<div class="t" style="right:721.96px;top:307.585px;line-height:15.2px;font-size:7.6px;color:#262626;transform:scaleX(0.89);transform-origin:100% 0;-webkit-text-stroke:0.1px #262626">0.707647</div>
<div class="t" style="right:685.8299999999999px;top:307.585px;line-height:15.2px;font-size:7.6px;color:#262626;transform:scaleX(0.89);transform-origin:100% 0;-webkit-text-stroke:0.1px #262626">71.61%</div>
<div class="t" style="right:974.87px;top:318.87499999999994px;line-height:15.2px;font-size:7.6px;color:#262626;transform:scaleX(0.89);transform-origin:100% 0;-webkit-text-stroke:0.1px #262626">1.6</div>
<div class="t" style="right:938.74px;top:318.87499999999994px;line-height:15.2px;font-size:7.6px;color:#262626;transform:scaleX(0.89);transform-origin:100% 0;-webkit-text-stroke:0.1px #262626">5.00E+00</div>
<div class="t" style="right:902.61px;top:318.87499999999994px;line-height:15.2px;font-size:7.6px;color:#262626;transform:scaleX(0.89);transform-origin:100% 0;-webkit-text-stroke:0.1px #262626">5.23E-01</div>
<div class="t" style="right:866.48px;top:318.87499999999994px;line-height:15.2px;font-size:7.6px;color:#262626;transform:scaleX(0.89);transform-origin:100% 0;-webkit-text-stroke:0.1px #262626">2.616812</div>
<div class="t" style="right:830.35px;top:318.87499999999994px;line-height:15.2px;font-size:7.6px;color:#262626;transform:scaleX(0.89);transform-origin:100% 0;-webkit-text-stroke:0.1px #262626">1.19E+00</div>
<div class="t" style="right:794.22px;top:318.87499999999994px;line-height:15.2px;font-size:7.6px;color:#262626;transform:scaleX(0.89);transform-origin:100% 0;-webkit-text-stroke:0.1px #262626">1.60E+00</div>
<div class="t" style="right:758.0899999999999px;top:318.87499999999994px;line-height:15.2px;font-size:7.6px;color:#262626;transform:scaleX(0.89);transform-origin:100% 0;-webkit-text-stroke:0.1px #262626">1.904417</div>
<div class="t" style="right:721.96px;top:318.87499999999994px;line-height:15.2px;font-size:7.6px;color:#262626;transform:scaleX(0.89);transform-origin:100% 0;-webkit-text-stroke:0.1px #262626">0.712395</div>
<div class="t" style="right:685.8299999999999px;top:318.87499999999994px;line-height:15.2px;font-size:7.6px;color:#262626;transform:scaleX(0.89);transform-origin:100% 0;-webkit-text-stroke:0.1px #262626">72.78%</div>
<div class="t" style="right:974.87px;top:330.1649999999999px;line-height:15.2px;font-size:7.6px;color:#262626;transform:scaleX(0.89);transform-origin:100% 0;-webkit-text-stroke:0.1px #262626">1.7</div>
<div class="t" style="right:938.74px;top:330.1649999999999px;line-height:15.2px;font-size:7.6px;color:#262626;transform:scaleX(0.89);transform-origin:100% 0;-webkit-text-stroke:0.1px #262626">5.00E+00</div>
<div class="t" style="right:902.61px;top:330.1649999999999px;line-height:15.2px;font-size:7.6px;color:#262626;transform:scaleX(0.89);transform-origin:100% 0;-webkit-text-stroke:0.1px #262626">5.48E-01</div>
<div class="t" style="right:866.48px;top:330.1649999999999px;line-height:15.2px;font-size:7.6px;color:#262626;transform:scaleX(0.89);transform-origin:100% 0;-webkit-text-stroke:0.1px #262626">2.741666</div>
<div class="t" style="right:830.35px;top:330.1649999999999px;line-height:15.2px;font-size:7.6px;color:#262626;transform:scaleX(0.89);transform-origin:100% 0;-webkit-text-stroke:0.1px #262626">1.19E+00</div>
<div class="t" style="right:794.22px;top:330.1649999999999px;line-height:15.2px;font-size:7.6px;color:#262626;transform:scaleX(0.89);transform-origin:100% 0;-webkit-text-stroke:0.1px #262626">1.70E+00</div>
<div class="t" style="right:758.0899999999999px;top:330.1649999999999px;line-height:15.2px;font-size:7.6px;color:#262626;transform:scaleX(0.89);transform-origin:100% 0;-webkit-text-stroke:0.1px #262626">2.023564</div>
<div class="t" style="right:721.96px;top:330.1649999999999px;line-height:15.2px;font-size:7.6px;color:#262626;transform:scaleX(0.89);transform-origin:100% 0;-webkit-text-stroke:0.1px #262626">0.718101</div>
<div class="t" style="right:685.8299999999999px;top:330.1649999999999px;line-height:15.2px;font-size:7.6px;color:#262626;transform:scaleX(0.89);transform-origin:100% 0;-webkit-text-stroke:0.1px #262626">73.81%</div>
<div class="t" style="right:974.87px;top:341.455px;line-height:15.2px;font-size:7.6px;color:#262626;transform:scaleX(0.89);transform-origin:100% 0;-webkit-text-stroke:0.1px #262626">1.8</div>
<div class="t" style="right:938.74px;top:341.455px;line-height:15.2px;font-size:7.6px;color:#262626;transform:scaleX(0.89);transform-origin:100% 0;-webkit-text-stroke:0.1px #262626">5.00E+00</div>
<div class="t" style="right:902.61px;top:341.455px;line-height:15.2px;font-size:7.6px;color:#262626;transform:scaleX(0.89);transform-origin:100% 0;-webkit-text-stroke:0.1px #262626">5.73E-01</div>
<div class="t" style="right:866.48px;top:341.455px;line-height:15.2px;font-size:7.6px;color:#262626;transform:scaleX(0.89);transform-origin:100% 0;-webkit-text-stroke:0.1px #262626">2.866866</div>
<div class="t" style="right:830.35px;top:341.455px;line-height:15.2px;font-size:7.6px;color:#262626;transform:scaleX(0.89);transform-origin:100% 0;-webkit-text-stroke:0.1px #262626">1.19E+00</div>
<div class="t" style="right:794.22px;top:341.455px;line-height:15.2px;font-size:7.6px;color:#262626;transform:scaleX(0.89);transform-origin:100% 0;-webkit-text-stroke:0.1px #262626">1.80E+00</div>
<div class="t" style="right:758.0899999999999px;top:341.455px;line-height:15.2px;font-size:7.6px;color:#262626;transform:scaleX(0.89);transform-origin:100% 0;-webkit-text-stroke:0.1px #262626">2.142845</div>
<div class="t" style="right:721.96px;top:341.455px;line-height:15.2px;font-size:7.6px;color:#262626;transform:scaleX(0.89);transform-origin:100% 0;-webkit-text-stroke:0.1px #262626">0.724021</div>
<div class="t" style="right:685.8299999999999px;top:341.455px;line-height:15.2px;font-size:7.6px;color:#262626;transform:scaleX(0.89);transform-origin:100% 0;-webkit-text-stroke:0.1px #262626">74.75%</div>
<div class="t" style="right:974.87px;top:352.74499999999995px;line-height:15.2px;font-size:7.6px;color:#262626;transform:scaleX(0.89);transform-origin:100% 0;-webkit-text-stroke:0.1px #262626">1.9</div>
<div class="t" style="right:938.74px;top:352.74499999999995px;line-height:15.2px;font-size:7.6px;color:#262626;transform:scaleX(0.89);transform-origin:100% 0;-webkit-text-stroke:0.1px #262626">5.00E+00</div>
<div class="t" style="right:902.61px;top:352.74499999999995px;line-height:15.2px;font-size:7.6px;color:#262626;transform:scaleX(0.89);transform-origin:100% 0;-webkit-text-stroke:0.1px #262626">5.98E-01</div>
<div class="t" style="right:866.48px;top:352.74499999999995px;line-height:15.2px;font-size:7.6px;color:#262626;transform:scaleX(0.89);transform-origin:100% 0;-webkit-text-stroke:0.1px #262626">2.992312</div>
<div class="t" style="right:830.35px;top:352.74499999999995px;line-height:15.2px;font-size:7.6px;color:#262626;transform:scaleX(0.89);transform-origin:100% 0;-webkit-text-stroke:0.1px #262626">1.19E+00</div>
<div class="t" style="right:794.22px;top:352.74499999999995px;line-height:15.2px;font-size:7.6px;color:#262626;transform:scaleX(0.89);transform-origin:100% 0;-webkit-text-stroke:0.1px #262626">1.90E+00</div>
<div class="t" style="right:758.0899999999999px;top:352.74499999999995px;line-height:15.2px;font-size:7.6px;color:#262626;transform:scaleX(0.89);transform-origin:100% 0;-webkit-text-stroke:0.1px #262626">2.261874</div>
<div class="t" style="right:721.96px;top:352.74499999999995px;line-height:15.2px;font-size:7.6px;color:#262626;transform:scaleX(0.89);transform-origin:100% 0;-webkit-text-stroke:0.1px #262626">0.730438</div>
<div class="t" style="right:685.8299999999999px;top:352.74499999999995px;line-height:15.2px;font-size:7.6px;color:#262626;transform:scaleX(0.89);transform-origin:100% 0;-webkit-text-stroke:0.1px #262626">75.59%</div>
<div class="t" style="right:974.87px;top:364.0349999999999px;line-height:15.2px;font-size:7.6px;color:#262626;transform:scaleX(0.89);transform-origin:100% 0;-webkit-text-stroke:0.1px #262626">2</div>
<div class="t" style="right:938.74px;top:364.0349999999999px;line-height:15.2px;font-size:7.6px;color:#262626;transform:scaleX(0.89);transform-origin:100% 0;-webkit-text-stroke:0.1px #262626">5.00E+00</div>
<div class="t" style="right:902.61px;top:364.0349999999999px;line-height:15.2px;font-size:7.6px;color:#262626;transform:scaleX(0.89);transform-origin:100% 0;-webkit-text-stroke:0.1px #262626">6.24E-01</div>
<div class="t" style="right:866.48px;top:364.0349999999999px;line-height:15.2px;font-size:7.6px;color:#262626;transform:scaleX(0.89);transform-origin:100% 0;-webkit-text-stroke:0.1px #262626">3.118952</div>
<div class="t" style="right:830.35px;top:364.0349999999999px;line-height:15.2px;font-size:7.6px;color:#262626;transform:scaleX(0.89);transform-origin:100% 0;-webkit-text-stroke:0.1px #262626">1.19E+00</div>
<div class="t" style="right:794.22px;top:364.0349999999999px;line-height:15.2px;font-size:7.6px;color:#262626;transform:scaleX(0.89);transform-origin:100% 0;-webkit-text-stroke:0.1px #262626">2.00E+00</div>
<div class="t" style="right:758.0899999999999px;top:364.0349999999999px;line-height:15.2px;font-size:7.6px;color:#262626;transform:scaleX(0.89);transform-origin:100% 0;-webkit-text-stroke:0.1px #262626">2.381115</div>
<div class="t" style="right:721.96px;top:364.0349999999999px;line-height:15.2px;font-size:7.6px;color:#262626;transform:scaleX(0.89);transform-origin:100% 0;-webkit-text-stroke:0.1px #262626">0.737837</div>
<div class="t" style="right:685.8299999999999px;top:364.0349999999999px;line-height:15.2px;font-size:7.6px;color:#262626;transform:scaleX(0.89);transform-origin:100% 0;-webkit-text-stroke:0.1px #262626">76.34%</div>
<div class="t" style="right:974.87px;top:375.325px;line-height:15.2px;font-size:7.6px;color:#262626;transform:scaleX(0.89);transform-origin:100% 0;-webkit-text-stroke:0.1px #262626">2.1</div>
<div class="t" style="right:938.74px;top:375.325px;line-height:15.2px;font-size:7.6px;color:#262626;transform:scaleX(0.89);transform-origin:100% 0;-webkit-text-stroke:0.1px #262626">5.00E+00</div>
<div class="t" style="right:902.61px;top:375.325px;line-height:15.2px;font-size:7.6px;color:#262626;transform:scaleX(0.89);transform-origin:100% 0;-webkit-text-stroke:0.1px #262626">6.49E-01</div>
<div class="t" style="right:866.48px;top:375.325px;line-height:15.2px;font-size:7.6px;color:#262626;transform:scaleX(0.89);transform-origin:100% 0;-webkit-text-stroke:0.1px #262626">3.245237</div>
<div class="t" style="right:830.35px;top:375.325px;line-height:15.2px;font-size:7.6px;color:#262626;transform:scaleX(0.89);transform-origin:100% 0;-webkit-text-stroke:0.1px #262626">1.19E+00</div>
<div class="t" style="right:794.22px;top:375.325px;line-height:15.2px;font-size:7.6px;color:#262626;transform:scaleX(0.89);transform-origin:100% 0;-webkit-text-stroke:0.1px #262626">2.10E+00</div>
<div class="t" style="right:758.0899999999999px;top:375.325px;line-height:15.2px;font-size:7.6px;color:#262626;transform:scaleX(0.89);transform-origin:100% 0;-webkit-text-stroke:0.1px #262626">2.500116</div>
<div class="t" style="right:721.96px;top:375.325px;line-height:15.2px;font-size:7.6px;color:#262626;transform:scaleX(0.89);transform-origin:100% 0;-webkit-text-stroke:0.1px #262626">0.745121</div>
<div class="t" style="right:685.8299999999999px;top:375.325px;line-height:15.2px;font-size:7.6px;color:#262626;transform:scaleX(0.89);transform-origin:100% 0;-webkit-text-stroke:0.1px #262626">77.04%</div>
<div class="t" style="right:974.87px;top:386.61499999999995px;line-height:15.2px;font-size:7.6px;color:#262626;transform:scaleX(0.89);transform-origin:100% 0;-webkit-text-stroke:0.1px #262626">2.2</div>
<div class="t" style="right:938.74px;top:386.61499999999995px;line-height:15.2px;font-size:7.6px;color:#262626;transform:scaleX(0.89);transform-origin:100% 0;-webkit-text-stroke:0.1px #262626">5.00E+00</div>
<div class="t" style="right:902.61px;top:386.61499999999995px;line-height:15.2px;font-size:7.6px;color:#262626;transform:scaleX(0.89);transform-origin:100% 0;-webkit-text-stroke:0.1px #262626">6.74E-01</div>
<div class="t" style="right:866.48px;top:386.61499999999995px;line-height:15.2px;font-size:7.6px;color:#262626;transform:scaleX(0.89);transform-origin:100% 0;-webkit-text-stroke:0.1px #262626">3.37153</div>
<div class="t" style="right:830.35px;top:386.61499999999995px;line-height:15.2px;font-size:7.6px;color:#262626;transform:scaleX(0.89);transform-origin:100% 0;-webkit-text-stroke:0.1px #262626">1.19E+00</div>
<div class="t" style="right:794.22px;top:386.61499999999995px;line-height:15.2px;font-size:7.6px;color:#262626;transform:scaleX(0.89);transform-origin:100% 0;-webkit-text-stroke:0.1px #262626">2.20E+00</div>
<div class="t" style="right:758.0899999999999px;top:386.61499999999995px;line-height:15.2px;font-size:7.6px;color:#262626;transform:scaleX(0.89);transform-origin:100% 0;-webkit-text-stroke:0.1px #262626">2.618698</div>
<div class="t" style="right:721.96px;top:386.61499999999995px;line-height:15.2px;font-size:7.6px;color:#262626;transform:scaleX(0.89);transform-origin:100% 0;-webkit-text-stroke:0.1px #262626">0.752832</div>
<div class="t" style="right:685.8299999999999px;top:386.61499999999995px;line-height:15.2px;font-size:7.6px;color:#262626;transform:scaleX(0.89);transform-origin:100% 0;-webkit-text-stroke:0.1px #262626">77.67%</div>
<div class="t" style="right:974.87px;top:397.9049999999999px;line-height:15.2px;font-size:7.6px;color:#262626;transform:scaleX(0.89);transform-origin:100% 0;-webkit-text-stroke:0.1px #262626">2.3</div>
<div class="t" style="right:938.74px;top:397.9049999999999px;line-height:15.2px;font-size:7.6px;color:#262626;transform:scaleX(0.89);transform-origin:100% 0;-webkit-text-stroke:0.1px #262626">5.00E+00</div>
<div class="t" style="right:902.61px;top:397.9049999999999px;line-height:15.2px;font-size:7.6px;color:#262626;transform:scaleX(0.89);transform-origin:100% 0;-webkit-text-stroke:0.1px #262626">7.00E-01</div>
<div class="t" style="right:866.48px;top:397.9049999999999px;line-height:15.2px;font-size:7.6px;color:#262626;transform:scaleX(0.89);transform-origin:100% 0;-webkit-text-stroke:0.1px #262626">3.498803</div>
<div class="t" style="right:830.35px;top:397.9049999999999px;line-height:15.2px;font-size:7.6px;color:#262626;transform:scaleX(0.89);transform-origin:100% 0;-webkit-text-stroke:0.1px #262626">1.19E+00</div>
<div class="t" style="right:794.22px;top:397.9049999999999px;line-height:15.2px;font-size:7.6px;color:#262626;transform:scaleX(0.89);transform-origin:100% 0;-webkit-text-stroke:0.1px #262626">2.30E+00</div>
<div class="t" style="right:758.0899999999999px;top:397.9049999999999px;line-height:15.2px;font-size:7.6px;color:#262626;transform:scaleX(0.89);transform-origin:100% 0;-webkit-text-stroke:0.1px #262626">2.737624</div>
<div class="t" style="right:721.96px;top:397.9049999999999px;line-height:15.2px;font-size:7.6px;color:#262626;transform:scaleX(0.89);transform-origin:100% 0;-webkit-text-stroke:0.1px #262626">0.761179</div>
<div class="t" style="right:685.8299999999999px;top:397.9049999999999px;line-height:15.2px;font-size:7.6px;color:#262626;transform:scaleX(0.89);transform-origin:100% 0;-webkit-text-stroke:0.1px #262626">78.24%</div>
<div class="t" style="right:974.87px;top:409.195px;line-height:15.2px;font-size:7.6px;color:#262626;transform:scaleX(0.89);transform-origin:100% 0;-webkit-text-stroke:0.1px #262626">2.4</div>
<div class="t" style="right:938.74px;top:409.195px;line-height:15.2px;font-size:7.6px;color:#262626;transform:scaleX(0.89);transform-origin:100% 0;-webkit-text-stroke:0.1px #262626">5.00E+00</div>
<div class="t" style="right:902.61px;top:409.195px;line-height:15.2px;font-size:7.6px;color:#262626;transform:scaleX(0.89);transform-origin:100% 0;-webkit-text-stroke:0.1px #262626">7.25E-01</div>
<div class="t" style="right:866.48px;top:409.195px;line-height:15.2px;font-size:7.6px;color:#262626;transform:scaleX(0.89);transform-origin:100% 0;-webkit-text-stroke:0.1px #262626">3.626118</div>
<div class="t" style="right:830.35px;top:409.195px;line-height:15.2px;font-size:7.6px;color:#262626;transform:scaleX(0.89);transform-origin:100% 0;-webkit-text-stroke:0.1px #262626">1.19E+00</div>
<div class="t" style="right:794.22px;top:409.195px;line-height:15.2px;font-size:7.6px;color:#262626;transform:scaleX(0.89);transform-origin:100% 0;-webkit-text-stroke:0.1px #262626">2.40E+00</div>
<div class="t" style="right:758.0899999999999px;top:409.195px;line-height:15.2px;font-size:7.6px;color:#262626;transform:scaleX(0.89);transform-origin:100% 0;-webkit-text-stroke:0.1px #262626">2.856533</div>
<div class="t" style="right:721.96px;top:409.195px;line-height:15.2px;font-size:7.6px;color:#262626;transform:scaleX(0.89);transform-origin:100% 0;-webkit-text-stroke:0.1px #262626">0.769585</div>
<div class="t" style="right:685.8299999999999px;top:409.195px;line-height:15.2px;font-size:7.6px;color:#262626;transform:scaleX(0.89);transform-origin:100% 0;-webkit-text-stroke:0.1px #262626">78.78%</div>
<div class="t" style="right:974.87px;top:420.48499999999996px;line-height:15.2px;font-size:7.6px;color:#262626;transform:scaleX(0.89);transform-origin:100% 0;-webkit-text-stroke:0.1px #262626">2.5</div>
<div class="t" style="right:938.74px;top:420.48499999999996px;line-height:15.2px;font-size:7.6px;color:#262626;transform:scaleX(0.89);transform-origin:100% 0;-webkit-text-stroke:0.1px #262626">5.00E+00</div>
<div class="t" style="right:902.61px;top:420.48499999999996px;line-height:15.2px;font-size:7.6px;color:#262626;transform:scaleX(0.89);transform-origin:100% 0;-webkit-text-stroke:0.1px #262626">7.51E-01</div>
<div class="t" style="right:866.48px;top:420.48499999999996px;line-height:15.2px;font-size:7.6px;color:#262626;transform:scaleX(0.89);transform-origin:100% 0;-webkit-text-stroke:0.1px #262626">3.754423</div>
<div class="t" style="right:830.35px;top:420.48499999999996px;line-height:15.2px;font-size:7.6px;color:#262626;transform:scaleX(0.89);transform-origin:100% 0;-webkit-text-stroke:0.1px #262626">1.19E+00</div>
<div class="t" style="right:794.22px;top:420.48499999999996px;line-height:15.2px;font-size:7.6px;color:#262626;transform:scaleX(0.89);transform-origin:100% 0;-webkit-text-stroke:0.1px #262626">2.50E+00</div>
<div class="t" style="right:758.0899999999999px;top:420.48499999999996px;line-height:15.2px;font-size:7.6px;color:#262626;transform:scaleX(0.89);transform-origin:100% 0;-webkit-text-stroke:0.1px #262626">2.975509</div>
<div class="t" style="right:721.96px;top:420.48499999999996px;line-height:15.2px;font-size:7.6px;color:#262626;transform:scaleX(0.89);transform-origin:100% 0;-webkit-text-stroke:0.1px #262626">0.778914</div>
<div class="t" style="right:685.8299999999999px;top:420.48499999999996px;line-height:15.2px;font-size:7.6px;color:#262626;transform:scaleX(0.89);transform-origin:100% 0;-webkit-text-stroke:0.1px #262626">79.25%</div>
<div class="t" style="right:974.87px;top:431.7749999999999px;line-height:15.2px;font-size:7.6px;color:#262626;transform:scaleX(0.89);transform-origin:100% 0;-webkit-text-stroke:0.1px #262626">2.6</div>
<div class="t" style="right:938.74px;top:431.7749999999999px;line-height:15.2px;font-size:7.6px;color:#262626;transform:scaleX(0.89);transform-origin:100% 0;-webkit-text-stroke:0.1px #262626">5.00E+00</div>
<div class="t" style="right:902.61px;top:431.7749999999999px;line-height:15.2px;font-size:7.6px;color:#262626;transform:scaleX(0.89);transform-origin:100% 0;-webkit-text-stroke:0.1px #262626">7.77E-01</div>
<div class="t" style="right:866.48px;top:431.7749999999999px;line-height:15.2px;font-size:7.6px;color:#262626;transform:scaleX(0.89);transform-origin:100% 0;-webkit-text-stroke:0.1px #262626">3.882461</div>
<div class="t" style="right:830.35px;top:431.7749999999999px;line-height:15.2px;font-size:7.6px;color:#262626;transform:scaleX(0.89);transform-origin:100% 0;-webkit-text-stroke:0.1px #262626">1.19E+00</div>
<div class="t" style="right:794.22px;top:431.7749999999999px;line-height:15.2px;font-size:7.6px;color:#262626;transform:scaleX(0.89);transform-origin:100% 0;-webkit-text-stroke:0.1px #262626">2.60E+00</div>
<div class="t" style="right:758.0899999999999px;top:431.7749999999999px;line-height:15.2px;font-size:7.6px;color:#262626;transform:scaleX(0.89);transform-origin:100% 0;-webkit-text-stroke:0.1px #262626">3.094208</div>
<div class="t" style="right:721.96px;top:431.7749999999999px;line-height:15.2px;font-size:7.6px;color:#262626;transform:scaleX(0.89);transform-origin:100% 0;-webkit-text-stroke:0.1px #262626">0.788253</div>
<div class="t" style="right:685.8299999999999px;top:431.7749999999999px;line-height:15.2px;font-size:7.6px;color:#262626;transform:scaleX(0.89);transform-origin:100% 0;-webkit-text-stroke:0.1px #262626">79.70%</div>
<div class="t" style="right:974.87px;top:443.065px;line-height:15.2px;font-size:7.6px;color:#262626;transform:scaleX(0.89);transform-origin:100% 0;-webkit-text-stroke:0.1px #262626">2.7</div>
<div class="t" style="right:938.74px;top:443.065px;line-height:15.2px;font-size:7.6px;color:#262626;transform:scaleX(0.89);transform-origin:100% 0;-webkit-text-stroke:0.1px #262626">5.00E+00</div>
<div class="t" style="right:902.61px;top:443.065px;line-height:15.2px;font-size:7.6px;color:#262626;transform:scaleX(0.89);transform-origin:100% 0;-webkit-text-stroke:0.1px #262626">8.02E-01</div>
<div class="t" style="right:866.48px;top:443.065px;line-height:15.2px;font-size:7.6px;color:#262626;transform:scaleX(0.89);transform-origin:100% 0;-webkit-text-stroke:0.1px #262626">4.011167</div>
<div class="t" style="right:830.35px;top:443.065px;line-height:15.2px;font-size:7.6px;color:#262626;transform:scaleX(0.89);transform-origin:100% 0;-webkit-text-stroke:0.1px #262626">1.19E+00</div>
<div class="t" style="right:794.22px;top:443.065px;line-height:15.2px;font-size:7.6px;color:#262626;transform:scaleX(0.89);transform-origin:100% 0;-webkit-text-stroke:0.1px #262626">2.70E+00</div>
<div class="t" style="right:758.0899999999999px;top:443.065px;line-height:15.2px;font-size:7.6px;color:#262626;transform:scaleX(0.89);transform-origin:100% 0;-webkit-text-stroke:0.1px #262626">3.213264</div>
<div class="t" style="right:721.96px;top:443.065px;line-height:15.2px;font-size:7.6px;color:#262626;transform:scaleX(0.89);transform-origin:100% 0;-webkit-text-stroke:0.1px #262626">0.797903</div>
<div class="t" style="right:685.8299999999999px;top:443.065px;line-height:15.2px;font-size:7.6px;color:#262626;transform:scaleX(0.89);transform-origin:100% 0;-webkit-text-stroke:0.1px #262626">80.11%</div>
<div class="t" style="right:974.87px;top:454.35499999999996px;line-height:15.2px;font-size:7.6px;color:#262626;transform:scaleX(0.89);transform-origin:100% 0;-webkit-text-stroke:0.1px #262626">2.8</div>
<div class="t" style="right:938.74px;top:454.35499999999996px;line-height:15.2px;font-size:7.6px;color:#262626;transform:scaleX(0.89);transform-origin:100% 0;-webkit-text-stroke:0.1px #262626">5.00E+00</div>
<div class="t" style="right:902.61px;top:454.35499999999996px;line-height:15.2px;font-size:7.6px;color:#262626;transform:scaleX(0.89);transform-origin:100% 0;-webkit-text-stroke:0.1px #262626">8.28E-01</div>
<div class="t" style="right:866.48px;top:454.35499999999996px;line-height:15.2px;font-size:7.6px;color:#262626;transform:scaleX(0.89);transform-origin:100% 0;-webkit-text-stroke:0.1px #262626">4.139651</div>
<div class="t" style="right:830.35px;top:454.35499999999996px;line-height:15.2px;font-size:7.6px;color:#262626;transform:scaleX(0.89);transform-origin:100% 0;-webkit-text-stroke:0.1px #262626">1.19E+00</div>
<div class="t" style="right:794.22px;top:454.35499999999996px;line-height:15.2px;font-size:7.6px;color:#262626;transform:scaleX(0.89);transform-origin:100% 0;-webkit-text-stroke:0.1px #262626">2.80E+00</div>
<div class="t" style="right:758.0899999999999px;top:454.35499999999996px;line-height:15.2px;font-size:7.6px;color:#262626;transform:scaleX(0.89);transform-origin:100% 0;-webkit-text-stroke:0.1px #262626">3.332094</div>
<div class="t" style="right:721.96px;top:454.35499999999996px;line-height:15.2px;font-size:7.6px;color:#262626;transform:scaleX(0.89);transform-origin:100% 0;-webkit-text-stroke:0.1px #262626">0.807557</div>
<div class="t" style="right:685.8299999999999px;top:454.35499999999996px;line-height:15.2px;font-size:7.6px;color:#262626;transform:scaleX(0.89);transform-origin:100% 0;-webkit-text-stroke:0.1px #262626">80.49%</div>
<div class="t" style="right:974.87px;top:465.6449999999999px;line-height:15.2px;font-size:7.6px;color:#262626;transform:scaleX(0.89);transform-origin:100% 0;-webkit-text-stroke:0.1px #262626">2.9</div>
<div class="t" style="right:938.74px;top:465.6449999999999px;line-height:15.2px;font-size:7.6px;color:#262626;transform:scaleX(0.89);transform-origin:100% 0;-webkit-text-stroke:0.1px #262626">5.00E+00</div>
<div class="t" style="right:902.61px;top:465.6449999999999px;line-height:15.2px;font-size:7.6px;color:#262626;transform:scaleX(0.89);transform-origin:100% 0;-webkit-text-stroke:0.1px #262626">8.53E-01</div>
<div class="t" style="right:866.48px;top:465.6449999999999px;line-height:15.2px;font-size:7.6px;color:#262626;transform:scaleX(0.89);transform-origin:100% 0;-webkit-text-stroke:0.1px #262626">4.267352</div>
<div class="t" style="right:830.35px;top:465.6449999999999px;line-height:15.2px;font-size:7.6px;color:#262626;transform:scaleX(0.89);transform-origin:100% 0;-webkit-text-stroke:0.1px #262626">1.19E+00</div>
<div class="t" style="right:794.22px;top:465.6449999999999px;line-height:15.2px;font-size:7.6px;color:#262626;transform:scaleX(0.89);transform-origin:100% 0;-webkit-text-stroke:0.1px #262626">2.90E+00</div>
<div class="t" style="right:758.0899999999999px;top:465.6449999999999px;line-height:15.2px;font-size:7.6px;color:#262626;transform:scaleX(0.89);transform-origin:100% 0;-webkit-text-stroke:0.1px #262626">3.450821</div>
<div class="t" style="right:721.96px;top:465.6449999999999px;line-height:15.2px;font-size:7.6px;color:#262626;transform:scaleX(0.89);transform-origin:100% 0;-webkit-text-stroke:0.1px #262626">0.816531</div>
<div class="t" style="right:685.8299999999999px;top:465.6449999999999px;line-height:15.2px;font-size:7.6px;color:#262626;transform:scaleX(0.89);transform-origin:100% 0;-webkit-text-stroke:0.1px #262626">80.87%</div>
<div class="t" style="right:974.87px;top:476.9349999999999px;line-height:15.2px;font-size:7.6px;color:#262626;transform:scaleX(0.89);transform-origin:100% 0;-webkit-text-stroke:0.1px #262626">3</div>
<div class="t" style="right:938.74px;top:476.9349999999999px;line-height:15.2px;font-size:7.6px;color:#262626;transform:scaleX(0.89);transform-origin:100% 0;-webkit-text-stroke:0.1px #262626">5.00E+00</div>
<div class="t" style="right:902.61px;top:476.9349999999999px;line-height:15.2px;font-size:7.6px;color:#262626;transform:scaleX(0.89);transform-origin:100% 0;-webkit-text-stroke:0.1px #262626">8.79E-01</div>
<div class="t" style="right:866.48px;top:476.9349999999999px;line-height:15.2px;font-size:7.6px;color:#262626;transform:scaleX(0.89);transform-origin:100% 0;-webkit-text-stroke:0.1px #262626">4.395665</div>
<div class="t" style="right:830.35px;top:476.9349999999999px;line-height:15.2px;font-size:7.6px;color:#262626;transform:scaleX(0.89);transform-origin:100% 0;-webkit-text-stroke:0.1px #262626">1.19E+00</div>
<div class="t" style="right:794.22px;top:476.9349999999999px;line-height:15.2px;font-size:7.6px;color:#262626;transform:scaleX(0.89);transform-origin:100% 0;-webkit-text-stroke:0.1px #262626">3.00E+00</div>
<div class="t" style="right:758.0899999999999px;top:476.9349999999999px;line-height:15.2px;font-size:7.6px;color:#262626;transform:scaleX(0.89);transform-origin:100% 0;-webkit-text-stroke:0.1px #262626">3.569676</div>
<div class="t" style="right:721.96px;top:476.9349999999999px;line-height:15.2px;font-size:7.6px;color:#262626;transform:scaleX(0.89);transform-origin:100% 0;-webkit-text-stroke:0.1px #262626">0.825989</div>
<div class="t" style="right:685.8299999999999px;top:476.9349999999999px;line-height:15.2px;font-size:7.6px;color:#262626;transform:scaleX(0.89);transform-origin:100% 0;-webkit-text-stroke:0.1px #262626">81.21%</div>
<div class="t" style="right:974.87px;top:488.22499999999997px;line-height:15.2px;font-size:7.6px;color:#262626;transform:scaleX(0.89);transform-origin:100% 0;-webkit-text-stroke:0.1px #262626">3.1</div>
<div class="t" style="right:938.74px;top:488.22499999999997px;line-height:15.2px;font-size:7.6px;color:#262626;transform:scaleX(0.89);transform-origin:100% 0;-webkit-text-stroke:0.1px #262626">5.00E+00</div>
<div class="t" style="right:902.61px;top:488.22499999999997px;line-height:15.2px;font-size:7.6px;color:#262626;transform:scaleX(0.89);transform-origin:100% 0;-webkit-text-stroke:0.1px #262626">9.05E-01</div>
<div class="t" style="right:866.48px;top:488.22499999999997px;line-height:15.2px;font-size:7.6px;color:#262626;transform:scaleX(0.89);transform-origin:100% 0;-webkit-text-stroke:0.1px #262626">4.52421</div>
<div class="t" style="right:830.35px;top:488.22499999999997px;line-height:15.2px;font-size:7.6px;color:#262626;transform:scaleX(0.89);transform-origin:100% 0;-webkit-text-stroke:0.1px #262626">1.19E+00</div>
<div class="t" style="right:794.22px;top:488.22499999999997px;line-height:15.2px;font-size:7.6px;color:#262626;transform:scaleX(0.89);transform-origin:100% 0;-webkit-text-stroke:0.1px #262626">3.10E+00</div>
<div class="t" style="right:758.0899999999999px;top:488.22499999999997px;line-height:15.2px;font-size:7.6px;color:#262626;transform:scaleX(0.89);transform-origin:100% 0;-webkit-text-stroke:0.1px #262626">3.688461</div>
<div class="t" style="right:721.96px;top:488.22499999999997px;line-height:15.2px;font-size:7.6px;color:#262626;transform:scaleX(0.89);transform-origin:100% 0;-webkit-text-stroke:0.1px #262626">0.835749</div>
<div class="t" style="right:685.8299999999999px;top:488.22499999999997px;line-height:15.2px;font-size:7.6px;color:#262626;transform:scaleX(0.89);transform-origin:100% 0;-webkit-text-stroke:0.1px #262626">81.53%</div>
<div class="t" style="right:974.87px;top:499.51499999999993px;line-height:15.2px;font-size:7.6px;color:#262626;transform:scaleX(0.89);transform-origin:100% 0;-webkit-text-stroke:0.1px #262626">3.2</div>
<div class="t" style="right:938.74px;top:499.51499999999993px;line-height:15.2px;font-size:7.6px;color:#262626;transform:scaleX(0.89);transform-origin:100% 0;-webkit-text-stroke:0.1px #262626">5.00E+00</div>
<div class="t" style="right:902.61px;top:499.51499999999993px;line-height:15.2px;font-size:7.6px;color:#262626;transform:scaleX(0.89);transform-origin:100% 0;-webkit-text-stroke:0.1px #262626">9.31E-01</div>
<div class="t" style="right:866.48px;top:499.51499999999993px;line-height:15.2px;font-size:7.6px;color:#262626;transform:scaleX(0.89);transform-origin:100% 0;-webkit-text-stroke:0.1px #262626">4.653305</div>
<div class="t" style="right:830.35px;top:499.51499999999993px;line-height:15.2px;font-size:7.6px;color:#262626;transform:scaleX(0.89);transform-origin:100% 0;-webkit-text-stroke:0.1px #262626">1.19E+00</div>
<div class="t" style="right:794.22px;top:499.51499999999993px;line-height:15.2px;font-size:7.6px;color:#262626;transform:scaleX(0.89);transform-origin:100% 0;-webkit-text-stroke:0.1px #262626">3.20E+00</div>
<div class="t" style="right:758.0899999999999px;top:499.51499999999993px;line-height:15.2px;font-size:7.6px;color:#262626;transform:scaleX(0.89);transform-origin:100% 0;-webkit-text-stroke:0.1px #262626">3.807295</div>
<div class="t" style="right:721.96px;top:499.51499999999993px;line-height:15.2px;font-size:7.6px;color:#262626;transform:scaleX(0.89);transform-origin:100% 0;-webkit-text-stroke:0.1px #262626">0.84601</div>
<div class="t" style="right:685.8299999999999px;top:499.51499999999993px;line-height:15.2px;font-size:7.6px;color:#262626;transform:scaleX(0.89);transform-origin:100% 0;-webkit-text-stroke:0.1px #262626">81.82%</div>
<div class="t" style="right:974.87px;top:510.80499999999984px;line-height:15.2px;font-size:7.6px;color:#262626;transform:scaleX(0.89);transform-origin:100% 0;-webkit-text-stroke:0.1px #262626">3.3</div>
<div class="t" style="right:938.74px;top:510.80499999999984px;line-height:15.2px;font-size:7.6px;color:#262626;transform:scaleX(0.89);transform-origin:100% 0;-webkit-text-stroke:0.1px #262626">5.00E+00</div>
<div class="t" style="right:902.61px;top:510.80499999999984px;line-height:15.2px;font-size:7.6px;color:#262626;transform:scaleX(0.89);transform-origin:100% 0;-webkit-text-stroke:0.1px #262626">9.56E-01</div>
<div class="t" style="right:866.48px;top:510.80499999999984px;line-height:15.2px;font-size:7.6px;color:#262626;transform:scaleX(0.89);transform-origin:100% 0;-webkit-text-stroke:0.1px #262626">4.782343</div>
<div class="t" style="right:830.35px;top:510.80499999999984px;line-height:15.2px;font-size:7.6px;color:#262626;transform:scaleX(0.89);transform-origin:100% 0;-webkit-text-stroke:0.1px #262626">1.19E+00</div>
<div class="t" style="right:794.22px;top:510.80499999999984px;line-height:15.2px;font-size:7.6px;color:#262626;transform:scaleX(0.89);transform-origin:100% 0;-webkit-text-stroke:0.1px #262626">3.30E+00</div>
<div class="t" style="right:758.0899999999999px;top:510.80499999999984px;line-height:15.2px;font-size:7.6px;color:#262626;transform:scaleX(0.89);transform-origin:100% 0;-webkit-text-stroke:0.1px #262626">3.925856</div>
<div class="t" style="right:721.96px;top:510.80499999999984px;line-height:15.2px;font-size:7.6px;color:#262626;transform:scaleX(0.89);transform-origin:100% 0;-webkit-text-stroke:0.1px #262626">0.856487</div>
<div class="t" style="right:685.8299999999999px;top:510.80499999999984px;line-height:15.2px;font-size:7.6px;color:#262626;transform:scaleX(0.89);transform-origin:100% 0;-webkit-text-stroke:0.1px #262626">82.09%</div>
<div class="b" style="left:13.3px;top:126.6px;width:326.97px;height:520px;border:2px solid #5a8f73;border-bottom:none;border-top:1.4px solid #2d5f44"></div>
<div class="b" style="left:13.100000000000001px;top:126.1px;width:1.8px;height:2.2px;background:#2d5f44"></div>
<div class="b" style="left:355px;top:127.6px;width:651.8px;height:378.79999999999995px;background:#fff;border:0.8px solid #dcdcdc;border-top:none"></div>
<svg class="b" style="left:0;top:0" width="1024" height="520" viewBox="0 0 1024 520"><path d="M386.5 489.20H985.4" stroke="#e2e2e2" stroke-width="0.8"/><path d="M386.5 452.20H985.4" stroke="#e2e2e2" stroke-width="0.8"/><path d="M386.5 415.20H985.4" stroke="#e2e2e2" stroke-width="0.8"/><path d="M386.5 378.20H985.4" stroke="#e2e2e2" stroke-width="0.8"/><path d="M386.5 341.20H985.4" stroke="#e2e2e2" stroke-width="0.8"/><path d="M386.5 304.20H985.4" stroke="#e2e2e2" stroke-width="0.8"/><path d="M386.5 267.20H985.4" stroke="#e2e2e2" stroke-width="0.8"/><path d="M386.5 230.20H985.4" stroke="#e2e2e2" stroke-width="0.8"/><path d="M386.5 193.20H985.4" stroke="#e2e2e2" stroke-width="0.8"/><path d="M386.5 156.20H985.4" stroke="#e2e2e2" stroke-width="0.8"/><path d="M386.50 156.2V489.2" stroke="#e2e2e2" stroke-width="0.8"/><path d="M486.32 156.2V489.2" stroke="#e2e2e2" stroke-width="0.8"/><path d="M586.13 156.2V489.2" stroke="#e2e2e2" stroke-width="0.8"/><path d="M685.95 156.2V489.2" stroke="#e2e2e2" stroke-width="0.8"/><path d="M785.77 156.2V489.2" stroke="#e2e2e2" stroke-width="0.8"/><path d="M885.58 156.2V489.2" stroke="#e2e2e2" stroke-width="0.8"/><path d="M985.40 156.2V489.2" stroke="#e2e2e2" stroke-width="0.8"/><polyline points="386.50,489.20 391.49,436.55 396.48,394.52 401.47,362.59 406.46,337.28 411.45,316.89 416.44,300.13 421.44,286.03 426.43,274.12 431.42,263.91 436.41,255.03 441.40,247.29 446.39,240.49 451.38,234.42 456.37,229.05 461.36,224.24 466.35,219.91 471.34,216.10 476.33,212.62 481.33,209.52 486.32,206.74 491.31,204.15 496.30,201.82 501.29,199.71 506.28,197.71 511.27,195.97 516.26,194.31 521.25,192.79 526.24,191.39 531.23,189.98 536.23,188.72 541.22,187.54 546.21,186.47 551.20,185.47 556.19,184.58 561.18,183.64 566.17,182.69 571.16,181.76 576.15,180.90 581.14,180.14 586.13,179.51 591.12,179.00 596.12,178.54 601.11,178.15 606.10,177.79 611.09,177.47 616.08,177.19 621.07,176.92 626.06,176.67 631.05,176.43 636.04,176.18 641.03,175.94 646.02,175.73 651.01,175.53 656.00,175.35 661.00,175.18 665.99,175.03 670.98,174.89 675.97,174.76 680.96,174.64 685.95,174.51 690.94,174.40 695.93,174.31 700.92,174.24 705.91,174.18 710.90,174.15 715.89,174.14 720.89,174.14 725.88,174.17 730.87,174.20 735.86,174.23 740.85,174.27 745.84,174.32 750.83,174.37 755.82,174.43 760.81,174.50 765.80,174.56 770.79,174.64 775.79,174.72 780.78,174.80 785.77,174.88 790.76,174.98 795.75,175.07 800.74,175.18 805.73,175.29 810.72,175.41 815.71,175.54 820.70,175.68 825.69,175.84 830.68,176.00 835.67,176.18 840.67,176.39 845.66,176.65 850.65,176.94 855.64,177.25 860.63,177.55 865.62,177.84" fill="none" stroke="#4470bf" stroke-width="1.3" stroke-linejoin="round"/><circle cx="386.50" cy="489.20" r="1.9" fill="#4269b5"/><circle cx="391.49" cy="436.55" r="1.9" fill="#4269b5"/><circle cx="396.48" cy="394.52" r="1.9" fill="#4269b5"/><circle cx="401.47" cy="362.59" r="1.9" fill="#4269b5"/><circle cx="406.46" cy="337.28" r="1.9" fill="#4269b5"/><circle cx="411.45" cy="316.89" r="1.9" fill="#4269b5"/><circle cx="416.44" cy="300.13" r="1.9" fill="#4269b5"/><circle cx="421.44" cy="286.03" r="1.9" fill="#4269b5"/><circle cx="426.43" cy="274.12" r="1.9" fill="#4269b5"/><circle cx="431.42" cy="263.91" r="1.9" fill="#4269b5"/><circle cx="436.41" cy="255.03" r="1.9" fill="#4269b5"/><circle cx="441.40" cy="247.29" r="1.9" fill="#4269b5"/><circle cx="446.39" cy="240.49" r="1.9" fill="#4269b5"/><circle cx="451.38" cy="234.42" r="1.9" fill="#4269b5"/><circle cx="456.37" cy="229.05" r="1.9" fill="#4269b5"/><circle cx="461.36" cy="224.24" r="1.9" fill="#4269b5"/><circle cx="466.35" cy="219.91" r="1.9" fill="#4269b5"/><circle cx="471.34" cy="216.10" r="1.9" fill="#4269b5"/><circle cx="476.33" cy="212.62" r="1.9" fill="#4269b5"/><circle cx="481.33" cy="209.52" r="1.9" fill="#4269b5"/><circle cx="486.32" cy="206.74" r="1.9" fill="#4269b5"/><circle cx="491.31" cy="204.15" r="1.9" fill="#4269b5"/><circle cx="496.30" cy="201.82" r="1.9" fill="#4269b5"/><circle cx="501.29" cy="199.71" r="1.9" fill="#4269b5"/><circle cx="506.28" cy="197.71" r="1.9" fill="#4269b5"/><circle cx="511.27" cy="195.97" r="1.9" fill="#4269b5"/><circle cx="516.26" cy="194.31" r="1.9" fill="#4269b5"/><circle cx="521.25" cy="192.79" r="1.9" fill="#4269b5"/><circle cx="526.24" cy="191.39" r="1.9" fill="#4269b5"/><circle cx="531.23" cy="189.98" r="1.9" fill="#4269b5"/><circle cx="536.23" cy="188.72" r="1.9" fill="#4269b5"/><circle cx="541.22" cy="187.54" r="1.9" fill="#4269b5"/><circle cx="546.21" cy="186.47" r="1.9" fill="#4269b5"/><circle cx="551.20" cy="185.47" r="1.9" fill="#4269b5"/><circle cx="556.19" cy="184.58" r="1.9" fill="#4269b5"/><circle cx="561.18" cy="183.64" r="1.9" fill="#4269b5"/><circle cx="566.17" cy="182.69" r="1.9" fill="#4269b5"/><circle cx="571.16" cy="181.76" r="1.9" fill="#4269b5"/><circle cx="576.15" cy="180.90" r="1.9" fill="#4269b5"/><circle cx="581.14" cy="180.14" r="1.9" fill="#4269b5"/><circle cx="586.13" cy="179.51" r="1.9" fill="#4269b5"/><circle cx="591.12" cy="179.00" r="1.9" fill="#4269b5"/><circle cx="596.12" cy="178.54" r="1.9" fill="#4269b5"/><circle cx="601.11" cy="178.15" r="1.9" fill="#4269b5"/><circle cx="606.10" cy="177.79" r="1.9" fill="#4269b5"/><circle cx="611.09" cy="177.47" r="1.9" fill="#4269b5"/><circle cx="616.08" cy="177.19" r="1.9" fill="#4269b5"/><circle cx="621.07" cy="176.92" r="1.9" fill="#4269b5"/><circle cx="626.06" cy="176.67" r="1.9" fill="#4269b5"/><circle cx="631.05" cy="176.43" r="1.9" fill="#4269b5"/><circle cx="636.04" cy="176.18" r="1.9" fill="#4269b5"/><circle cx="641.03" cy="175.94" r="1.9" fill="#4269b5"/><circle cx="646.02" cy="175.73" r="1.9" fill="#4269b5"/><circle cx="651.01" cy="175.53" r="1.9" fill="#4269b5"/><circle cx="656.00" cy="175.35" r="1.9" fill="#4269b5"/><circle cx="661.00" cy="175.18" r="1.9" fill="#4269b5"/><circle cx="665.99" cy="175.03" r="1.9" fill="#4269b5"/><circle cx="670.98" cy="174.89" r="1.9" fill="#4269b5"/><circle cx="675.97" cy="174.76" r="1.9" fill="#4269b5"/><circle cx="680.96" cy="174.64" r="1.9" fill="#4269b5"/><circle cx="685.95" cy="174.51" r="1.9" fill="#4269b5"/><circle cx="690.94" cy="174.40" r="1.9" fill="#4269b5"/><circle cx="695.93" cy="174.31" r="1.9" fill="#4269b5"/><circle cx="700.92" cy="174.24" r="1.9" fill="#4269b5"/><circle cx="705.91" cy="174.18" r="1.9" fill="#4269b5"/><circle cx="710.90" cy="174.15" r="1.9" fill="#4269b5"/><circle cx="715.89" cy="174.14" r="1.9" fill="#4269b5"/><circle cx="720.89" cy="174.14" r="1.9" fill="#4269b5"/><circle cx="725.88" cy="174.17" r="1.9" fill="#4269b5"/><circle cx="730.87" cy="174.20" r="1.9" fill="#4269b5"/><circle cx="735.86" cy="174.23" r="1.9" fill="#4269b5"/><circle cx="740.85" cy="174.27" r="1.9" fill="#4269b5"/><circle cx="745.84" cy="174.32" r="1.9" fill="#4269b5"/><circle cx="750.83" cy="174.37" r="1.9" fill="#4269b5"/><circle cx="755.82" cy="174.43" r="1.9" fill="#4269b5"/><circle cx="760.81" cy="174.50" r="1.9" fill="#4269b5"/><circle cx="765.80" cy="174.56" r="1.9" fill="#4269b5"/><circle cx="770.79" cy="174.64" r="1.9" fill="#4269b5"/><circle cx="775.79" cy="174.72" r="1.9" fill="#4269b5"/><circle cx="780.78" cy="174.80" r="1.9" fill="#4269b5"/><circle cx="785.77" cy="174.88" r="1.9" fill="#4269b5"/><circle cx="790.76" cy="174.98" r="1.9" fill="#4269b5"/><circle cx="795.75" cy="175.07" r="1.9" fill="#4269b5"/><circle cx="800.74" cy="175.18" r="1.9" fill="#4269b5"/><circle cx="805.73" cy="175.29" r="1.9" fill="#4269b5"/><circle cx="810.72" cy="175.41" r="1.9" fill="#4269b5"/><circle cx="815.71" cy="175.54" r="1.9" fill="#4269b5"/><circle cx="820.70" cy="175.68" r="1.9" fill="#4269b5"/><circle cx="825.69" cy="175.84" r="1.9" fill="#4269b5"/><circle cx="830.68" cy="176.00" r="1.9" fill="#4269b5"/><circle cx="835.67" cy="176.18" r="1.9" fill="#4269b5"/><circle cx="840.67" cy="176.39" r="1.9" fill="#4269b5"/><circle cx="845.66" cy="176.65" r="1.9" fill="#4269b5"/><circle cx="850.65" cy="176.94" r="1.9" fill="#4269b5"/><circle cx="855.64" cy="177.25" r="1.9" fill="#4269b5"/><circle cx="860.63" cy="177.55" r="1.9" fill="#4269b5"/><circle cx="865.62" cy="177.84" r="1.9" fill="#4269b5"/></svg>
<div class="t" style="right:643.7px;top:481.9px;line-height:14.4px;font-size:7.2px;color:#595959;transform:scaleX(0.86);transform-origin:100% 0">0.00%</div>
<div class="t" style="right:643.7px;top:444.9px;line-height:14.4px;font-size:7.2px;color:#595959;transform:scaleX(0.86);transform-origin:100% 0">10.00%</div>
<div class="t" style="right:643.7px;top:407.9px;line-height:14.4px;font-size:7.2px;color:#595959;transform:scaleX(0.86);transform-origin:100% 0">20.00%</div>
<div class="t" style="right:643.7px;top:370.9px;line-height:14.4px;font-size:7.2px;color:#595959;transform:scaleX(0.86);transform-origin:100% 0">30.00%</div>
<div class="t" style="right:643.7px;top:333.9px;line-height:14.4px;font-size:7.2px;color:#595959;transform:scaleX(0.86);transform-origin:100% 0">40.00%</div>
<div class="t" style="right:643.7px;top:296.9px;line-height:14.4px;font-size:7.2px;color:#595959;transform:scaleX(0.86);transform-origin:100% 0">50.00%</div>
<div class="t" style="right:643.7px;top:259.9px;line-height:14.4px;font-size:7.2px;color:#595959;transform:scaleX(0.86);transform-origin:100% 0">60.00%</div>
<div class="t" style="right:643.7px;top:222.9px;line-height:14.4px;font-size:7.2px;color:#595959;transform:scaleX(0.86);transform-origin:100% 0">70.00%</div>
<div class="t" style="right:643.7px;top:185.9px;line-height:14.4px;font-size:7.2px;color:#595959;transform:scaleX(0.86);transform-origin:100% 0">80.00%</div>
<div class="t" style="right:643.7px;top:148.9px;line-height:14.4px;font-size:7.2px;color:#595959;transform:scaleX(0.86);transform-origin:100% 0">90.00%</div>
<div class="t" style="left:186.5px;width:400px;text-align:center;top:489.79999999999995px;line-height:15.2px;font-size:7.6px;color:#595959;transform:scaleX(0.78)">0.00E+00</div>
<div class="t" style="left:286.31666666666666px;width:400px;text-align:center;top:489.79999999999995px;line-height:15.2px;font-size:7.6px;color:#595959;transform:scaleX(0.78)">2.00E+00</div>
<div class="t" style="left:386.1333333333333px;width:400px;text-align:center;top:489.79999999999995px;line-height:15.2px;font-size:7.6px;color:#595959;transform:scaleX(0.78)">4.00E+00</div>
<div class="t" style="left:485.95000000000005px;width:400px;text-align:center;top:489.79999999999995px;line-height:15.2px;font-size:7.6px;color:#595959;transform:scaleX(0.78)">6.00E+00</div>
<div class="t" style="left:585.7666666666667px;width:400px;text-align:center;top:489.79999999999995px;line-height:15.2px;font-size:7.6px;color:#595959;transform:scaleX(0.78)">8.00E+00</div>
<div class="t" style="left:685.5833333333333px;width:400px;text-align:center;top:489.79999999999995px;line-height:15.2px;font-size:7.6px;color:#595959;transform:scaleX(0.78)">1.00E+01</div>
<div class="t" style="left:785.4px;width:400px;text-align:center;top:489.79999999999995px;line-height:15.2px;font-size:7.6px;color:#595959;transform:scaleX(0.78)">1.20E+01</div>
<div class="t" style="left:480.79999999999995px;width:400px;text-align:center;top:131.0px;line-height:19.6px;font-size:9.8px;color:#595959;transform:scaleX(0.96)">Efficiency</div>
</body></html>
